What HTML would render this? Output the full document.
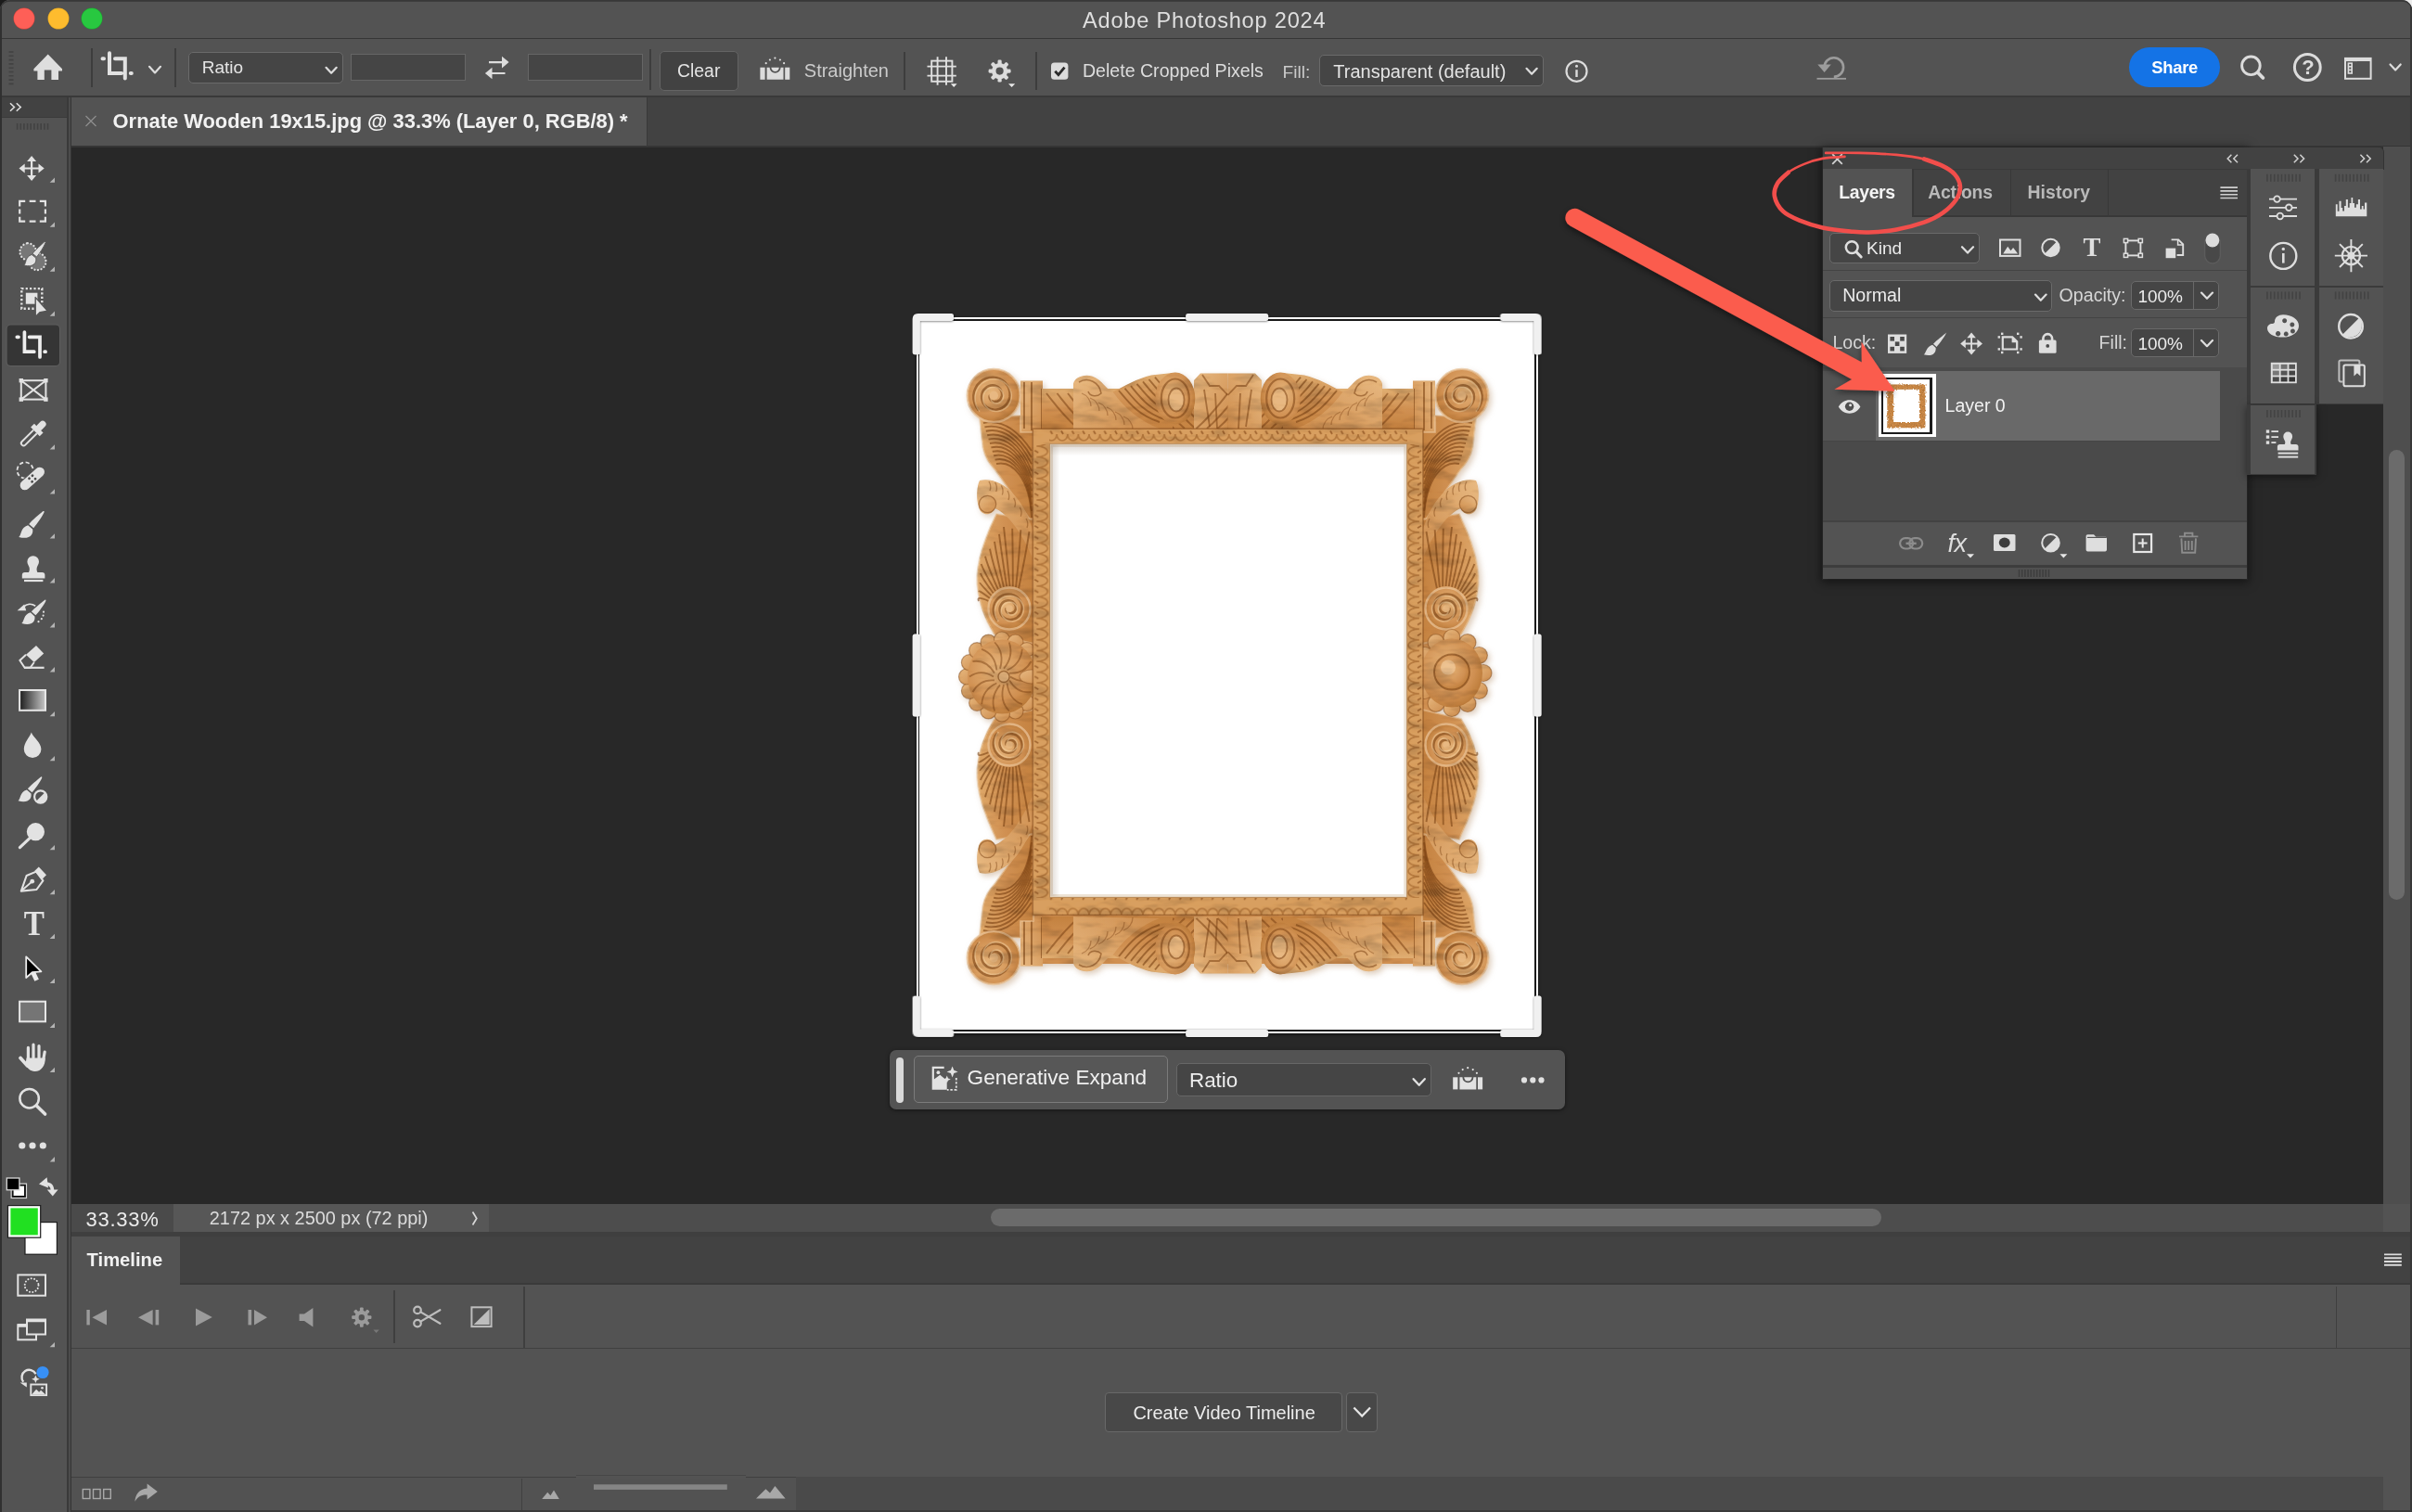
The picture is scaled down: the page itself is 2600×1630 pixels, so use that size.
<!DOCTYPE html>
<html lang="en">
<head>
<meta charset="utf-8">
<title>Adobe Photoshop 2024</title>
<style>
*{box-sizing:border-box;margin:0;padding:0}
html,body{width:2600px;height:1630px;overflow:hidden;background:#1b1b1b}
body{font-family:"Liberation Sans",sans-serif;color:#e4e4e4;position:relative}
.a{position:absolute}
.t{position:absolute;line-height:1;white-space:nowrap;transform:translateY(-0.8465em)}
.b{font-weight:bold}
svg{position:absolute;overflow:visible}
#win{will-change:transform;position:absolute;left:0;top:0;width:2600px;height:1630px;background:#535353;border-radius:11px 11px 0 0;overflow:hidden}
.fld{position:absolute;background:#454545;border:1.5px solid #6a6a6a;border-radius:5px}
.inp{position:absolute;background:#454545;border:1.5px solid #666}
.vsep{position:absolute;width:2px;background:#3d3d3d}
</style>
</head>
<body>
<div class="a" style="left:2584px;top:0;width:16px;height:16px;background:#ececec"></div>
<div id="win">
<!--TITLEBAR-->
<div class="a" style="left:0;top:0;width:2600px;height:41px;background:#535353"></div>
<div class="a" style="left:0;top:40.9px;width:2600px;height:1.4px;background:#363636"></div>
<div class="a" style="left:15px;top:9px;width:22px;height:22px;border-radius:50%;background:#fe5f57;box-shadow:0 0 0 .5px #d9453d"></div>
<div class="a" style="left:52px;top:9px;width:22px;height:22px;border-radius:50%;background:#febc2e;box-shadow:0 0 0 .5px #d8a020"></div>
<div class="a" style="left:88px;top:9px;width:22px;height:22px;border-radius:50%;background:#28c840;box-shadow:0 0 0 .5px #1aa52e"></div>
<span class="t" style="left:1167px;top:31px;font-size:23.6px;letter-spacing:.79px;color:#dfdfdf">Adobe Photoshop 2024</span>
<!--OPTIONS-->
<div class="a" style="left:0;top:103px;width:2600px;height:2.4px;background:#393939"></div>
<div class="vsep" style="left:97.6px;top:52px;height:42px"></div>
<div class="vsep" style="left:188.2px;top:52px;height:42px"></div>
<div class="vsep" style="left:700.3px;top:53px;height:44px"></div>
<div class="vsep" style="left:974.4px;top:56px;height:41px"></div>
<div class="vsep" style="left:1116.4px;top:56px;height:41px"></div>
<div class="fld" style="left:203.3px;top:55.5px;width:166.4px;height:34.2px"></div>
<span class="t" style="left:217.7px;top:79.2px;font-size:19px">Ratio</span>
<div class="inp" style="left:378.4px;top:57.6px;width:124px;height:29.6px"></div>
<div class="inp" style="left:569.2px;top:57.6px;width:124px;height:29.6px"></div>
<div class="fld" style="left:711px;top:55px;width:84.6px;height:42.8px;background:#424242;border-color:#646464"></div>
<span class="t" style="left:730px;top:82.7px;font-size:19.4px">Clear</span>
<span class="t" style="left:866.8px;top:82.7px;font-size:20px;color:#cbcbcb">Straighten</span>
<span class="t" style="left:1166.9px;top:84.3px;font-size:19.6px;color:#dddddd">Delete Cropped Pixels</span>
<span class="t" style="left:1382.5px;top:84.3px;font-size:19.2px;color:#cbcbcb">Fill:</span>
<div class="fld" style="left:1422.3px;top:59.4px;width:242px;height:33.4px"></div>
<span class="t" style="left:1437.3px;top:84.3px;font-size:20px">Transparent (default)</span>
<div class="a" style="left:2294.7px;top:50.8px;width:98.6px;height:43.5px;border-radius:22px;background:#1473e6"></div>
<span class="t b" style="left:2319.3px;top:79.5px;font-size:18.4px;letter-spacing:-.3px;color:#fff">Share</span>
<span class="t b" style="left:2481.3px;top:80.6px;font-size:22px;color:#dcdcdc">?</span>
<svg style="left:0;top:0" width="2600" height="110" viewBox="0 0 2600 110">
<g stroke="#424242" stroke-width="1.6"><path d="M9.5 56h5M9.5 60.3h5M9.5 64.6h5M9.5 68.9h5M9.5 73.2h5M9.5 77.5h5M9.5 81.8h5M9.5 86.1h5M9.5 90.4h5"/></g>
<path d="M51.7 58.6 67 74.2v2.4h-4V86H55.4V75.6H47.8V86H40.4V76.6h-4v-2.4z" fill="#dedede"/>
<g stroke="#e2e2e2" stroke-width="4" stroke-linecap="round" fill="none"><path d="M118 57.2V79.1H131M124 63.2H134.8V84.6M110.5 63.2H112M140.8 79.1H141.8"/></g>
<g stroke="#dcdcdc" stroke-width="2.2" fill="none" stroke-linecap="round" stroke-linejoin="round"><path d="M161 71.8l6 6.6 6-6.6"/><path d="M351.5 72.8l5.6 6 5.6-6"/><path d="M1645.5 73.8l5.6 6 5.6-6"/><path d="M2576.5 69.5l5.6 6 5.6-6"/></g>
<g fill="#dcdcdc"><path d="M527 66h14v-5.2l7.6 6.3-7.6 6.3V68.2H527zM544.5 77.9h-14v-5.2l-7.6 6.3 7.6 6.3v-5.2h14z"/></g>
<g fill="#dcdcdc"><rect x="819.4" y="72.7" width="5.2" height="13.1"/><rect x="846.2" y="72.7" width="5.1" height="13.1"/><path d="M826.6 72.7h3a6 6 0 0 0 12 0h2.9v13.1h-17.9z"/><path d="M831.4 72.7h8.4a4.2 4.2 0 0 1-8.4 0z"/><circle cx="825.7" cy="68.2" r="1.1"/><circle cx="829.9" cy="64.5" r="1.1"/><circle cx="835.4" cy="62.6" r="1.1"/><circle cx="840.9" cy="64.5" r="1.1"/><circle cx="845.1" cy="68.2" r="1.1"/></g>
<g stroke="#e0e0e0" stroke-width="1.9" fill="none"><rect x="1004.2" y="65.6" width="22.2" height="22.2"/><path d="M1010.6 61.2V91.8M1020 61.2V91.8M999.5 71.6H1030.8M999.5 81.6H1030.8"/></g>
<path d="M1024.8 90.3h6.8l-3.4 3.8zM1087 90.3h7.2l-3.6 3.8z" fill="#e8e8e8"/>
<g transform="translate(1077.6 76.6)" fill="#dcdcdc"><path fill-rule="evenodd" d="M0-8.6A8.6 8.6 0 1 0 0 8.6 8.6 8.6 0 1 0 0-8.6zM0-4.1A4.1 4.1 0 1 1 0 4.1 4.1 4.1 0 1 1 0-4.1z"/><g id="gt"><rect x="-2.1" y="-12" width="4.2" height="5" rx="1.4"/><rect x="-2.1" y="7" width="4.2" height="5" rx="1.4"/></g><use href="#gt" transform="rotate(45)"/><use href="#gt" transform="rotate(90)"/><use href="#gt" transform="rotate(135)"/></g>
<rect x="1133" y="67.6" width="18.4" height="18.2" rx="3.6" fill="#dcdcdc"/><path d="M1137.3 76.8l3.6 3.9 6.6-8" stroke="#2b2b2b" stroke-width="2.8" fill="none"/>
<g stroke="#dcdcdc" fill="none" stroke-width="2.2"><circle cx="1699.5" cy="76.8" r="11"/><path d="M1699.5 75.2V83" stroke-width="2.4"/></g><circle cx="1699.5" cy="71.2" r="1.5" fill="#dcdcdc"/>
<g stroke="#9c9c9c" fill="none" stroke-width="2.6"><path d="M1966.5 72.5A10.3 10.3 0 1 1 1976.8 82.8"/><path d="M1958.5 84.8H1990" stroke-width="1.8"/></g><path d="M1959.3 69.5h14.5l-7.2 8.6z" fill="#9c9c9c"/>
<g stroke="#dcdcdc" fill="none" stroke-width="2.900" stroke-linecap="round"><circle cx="2426.400" cy="70.800" r="9.800"/><path d="M2433.800 78.200l5.600 5.800" stroke-width="3.800"/></g>
<circle cx="2487.300" cy="72.500" r="13.900" stroke="#dcdcdc" stroke-width="3" fill="none"/>
<g stroke="#dcdcdc" fill="none" stroke-width="2"><rect x="2528" y="62.900" width="27.600" height="21.900"/><path d="M2528 64.400h27.600" stroke-width="3.400"/></g><rect x="2530.600" y="67.400" width="5.400" height="12.400" fill="#dcdcdc"/><g fill="#535353"><rect x="2532.300" y="69" width="2" height="2"/><rect x="2532.300" y="72.600" width="2" height="2"/><rect x="2532.300" y="76.200" width="2" height="2"/></g>
</svg>
<!--TABBAR-->
<div class="a" style="left:0;top:105.3px;width:2600px;height:52.7px;background:#424242"></div>
<div class="a" style="left:77.2px;top:105.3px;width:619.6px;height:51.6px;background:#535353"></div>
<div class="a" style="left:77.2px;top:156.9px;width:2523px;height:2px;background:#353535"></div>
<div class="a" style="left:696.8px;top:105.3px;width:1.4px;height:52.7px;background:#393939"></div>
<svg style="left:0;top:100px" width="200" height="60" viewBox="0 100 200 60"><path d="M92.5 125l11 11M103.5 125l-11 11" stroke="#8f8f8f" stroke-width="1.2"/></svg>
<span class="t b" style="left:121.6px;top:139.4px;font-size:21.9px;color:#f2f2f2">Ornate Wooden 19x15.jpg @ 33.3% (Layer 0, RGB/8) *</span>
<!--CANVAS-->
<div class="a" style="left:77.2px;top:158.9px;width:2491.5px;height:1139.1px;background:#282828"></div>
<div class="a" style="left:2568.7px;top:158px;width:31.3px;height:1140px;background:#4e4e4e"></div>
<div class="a" style="left:2574.6px;top:485px;width:17.6px;height:484.5px;border-radius:9px;background:#6b6b6b"></div>
<!--CROP-->
<div class="a" style="left:987.7px;top:342.4px;width:670px;height:771.2px;background:#1a1a1a;box-shadow:0 1px 3px rgba(0,0,0,.7)"></div>
<div class="a" style="left:987.7px;top:342.4px;width:670px;height:771.2px;border:2px solid #fff"></div>
<div class="a" style="left:991.2px;top:346px;width:662.6px;height:763.8px;background:#fff"></div>
<svg style="left:980px;top:336px" width="690" height="790" viewBox="980 336 690 790">
<defs>
<linearGradient id="wv" x1="0" x2="1" y1="0" y2="0"><stop offset="0" stop-color="#dba669"/><stop offset=".5" stop-color="#cc8d50"/><stop offset="1" stop-color="#c07f3f"/></linearGradient>
<linearGradient id="wh" x1="0" x2="0" y1="0" y2="1"><stop offset="0" stop-color="#dcab70"/><stop offset=".5" stop-color="#cc8d50"/><stop offset="1" stop-color="#bf7e3e"/></linearGradient>
<linearGradient id="wl" x1="0" x2="1" y1="0" y2="1"><stop offset="0" stop-color="#e4b680"/><stop offset="1" stop-color="#c98a4c"/></linearGradient>
<radialGradient id="wr" cx=".42" cy=".4" r=".65"><stop offset="0" stop-color="#e2b27a"/><stop offset=".7" stop-color="#cc8d50"/><stop offset="1" stop-color="#b57636"/></radialGradient>
<pattern id="bd" width="11.600" height="20" patternUnits="userSpaceOnUse" x="1116" y="462"><path d="M0 6a5.800 7 0 0 0 11.600 0" fill="none" stroke="#9a5d26" stroke-opacity=".6" stroke-width="1.600"/><path d="M4.800 2.500l2 3.500" stroke="#8a4f1e" stroke-width="1.800" stroke-opacity=".7"/></pattern>
<pattern id="bdv" width="20" height="11.6" patternUnits="userSpaceOnUse" x="1113.3" y="481"><path d="M4 0A12 5.8 0 0 1 4 11.6" fill="none" stroke="#9a5d26" stroke-opacity=".6" stroke-width="1.6"/><path d="M2 4.6l4 2.4" stroke="#8a4f1e" stroke-width="1.8" stroke-opacity=".7"/></pattern>
<filter id="fsh" x="-5%" y="-5%" width="112%" height="112%" color-interpolation-filters="sRGB"><feTurbulence type="fractalNoise" baseFrequency="0.03 0.09" numOctaves="3" seed="7" result="n"/><feColorMatrix in="n" type="matrix" values="0 0 0 0 0.62  0 0 0 0 0.62  0 0 0 0 0.62  0 0 0 0 1" result="base"/><feColorMatrix in="n" type="matrix" values="0.45 0 0 0 0.76  0.45 0 0 0 0.75  0.45 0 0 0 0.73  0 0 0 0 1" result="g"/><feComposite in="SourceGraphic" in2="g" operator="arithmetic" k1="1.02" k2="0" k3="0" k4="0" result="tex"/><feDropShadow in="tex" dx="2.5" dy="3" stdDeviation="3" flood-color="#a07040" flood-opacity=".35"/></filter>
<g id="fq"><path d="M1056 450L1059.5 482C1062 495 1068 501 1073 507L1114 566L1114 466L1100 466L1100 448z" fill="url(#wv)" stroke="#e9c7a0" stroke-width="2.2" stroke-opacity=".5" stroke-linejoin="round"/>
<path d="M1074 554C1062 580 1052 605 1053.5 630C1055 652 1062 668 1072 684L1114 694L1114 560z" fill="url(#wv)" stroke="#e9c7a0" stroke-width="2.2" stroke-opacity=".5" stroke-linejoin="round"/>
<path d="M1056 518C1080 513 1105 538 1114 575L1114 604C1102 574 1086 553 1072 548C1070 556 1058 557 1055 547C1052 536 1053 524 1056 518z" fill="url(#wl)"/>
<circle cx="1064.5" cy="543.5" r="9.2" fill="url(#wl)" stroke="#7a4214" stroke-opacity=".5" stroke-width="1.2"/>
<path d="M1060.0 456.0C1078.0 452.0 1096.0 462.0 1112.0 486.0" fill="none" stroke="#7a4214" stroke-opacity=".62" stroke-width="1.9"/>
<path d="M1061.4 460.4C1079.4 456.4 1097.4 467.4 1112.0 493.2" fill="none" stroke="#7a4214" stroke-opacity=".62" stroke-width="1.9"/>
<path d="M1062.8 464.8C1080.8 460.8 1098.8 472.8 1112.0 500.4" fill="none" stroke="#7a4214" stroke-opacity=".62" stroke-width="1.9"/>
<path d="M1064.2 469.2C1082.2 465.2 1100.2 478.2 1112.0 507.6" fill="none" stroke="#7a4214" stroke-opacity=".62" stroke-width="1.9"/>
<path d="M1065.6 473.6C1083.6 469.6 1101.6 483.6 1112.0 514.8" fill="none" stroke="#7a4214" stroke-opacity=".62" stroke-width="1.9"/>
<path d="M1067.0 478.0C1085.0 474.0 1103.0 489.0 1112.0 522.0" fill="none" stroke="#7a4214" stroke-opacity=".62" stroke-width="1.9"/>
<path d="M1068.4 482.4C1086.4 478.4 1104.4 494.4 1112.0 529.2" fill="none" stroke="#7a4214" stroke-opacity=".62" stroke-width="1.9"/>
<path d="M1069.8 486.8C1087.8 482.8 1105.8 499.8 1112.0 536.4" fill="none" stroke="#7a4214" stroke-opacity=".62" stroke-width="1.9"/>
<path d="M1071.2 491.2C1089.2 487.2 1107.2 505.2 1112.0 543.6" fill="none" stroke="#7a4214" stroke-opacity=".62" stroke-width="1.9"/>
<path d="M1072.6 495.6C1090.6 491.6 1108.6 510.6 1112.0 550.8" fill="none" stroke="#7a4214" stroke-opacity=".62" stroke-width="1.9"/>
<path d="M1074.0 500.0C1092.0 496.0 1110.0 516.0 1112.0 558.0" fill="none" stroke="#7a4214" stroke-opacity=".62" stroke-width="1.9"/>
<path d="M1065.4 647.8Q1052.2 641.9 1055.0 648.0" fill="none" stroke="#7a4214" stroke-opacity=".6" stroke-width="1.9"/>
<path d="M1066.8 644.8Q1054.1 635.4 1055.7 638.0" fill="none" stroke="#7a4214" stroke-opacity=".6" stroke-width="1.9"/>
<path d="M1068.5 641.9Q1056.1 629.0 1056.3 628.0" fill="none" stroke="#7a4214" stroke-opacity=".6" stroke-width="1.9"/>
<path d="M1070.7 639.4Q1058.3 622.7 1057.0 618.0" fill="none" stroke="#7a4214" stroke-opacity=".6" stroke-width="1.9"/>
<path d="M1073.1 637.2Q1060.7 616.6 1057.7 608.0" fill="none" stroke="#7a4214" stroke-opacity=".6" stroke-width="1.9"/>
<path d="M1075.8 635.3Q1065.1 611.5 1062.0 599.7" fill="none" stroke="#7a4214" stroke-opacity=".6" stroke-width="1.9"/>
<path d="M1078.8 633.8Q1069.9 606.8 1067.0 591.8" fill="none" stroke="#7a4214" stroke-opacity=".6" stroke-width="1.9"/>
<path d="M1082.0 632.8Q1074.8 602.3 1072.0 583.8" fill="none" stroke="#7a4214" stroke-opacity=".6" stroke-width="1.9"/>
<path d="M1085.2 632.2Q1079.8 598.0 1077.0 575.9" fill="none" stroke="#7a4214" stroke-opacity=".6" stroke-width="1.9"/>
<path d="M1088.5 632.0Q1084.8 594.0 1082.0 568.0" fill="none" stroke="#7a4214" stroke-opacity=".6" stroke-width="1.9"/>
<path d="M1091.8 632.3Q1091.8 595.0 1091.2 569.7" fill="none" stroke="#7a4214" stroke-opacity=".6" stroke-width="1.9"/>
<path d="M1095.1 633.1Q1098.9 596.2 1100.3 571.3" fill="none" stroke="#7a4214" stroke-opacity=".6" stroke-width="1.9"/>
<path d="M1098.1 634.2Q1105.8 597.6 1109.5 573.0" fill="none" stroke="#7a4214" stroke-opacity=".6" stroke-width="1.9"/>
<path d="M1066.0 519.0q3 5 1 10" fill="none" stroke="#7a4214" stroke-opacity=".45" stroke-width="1.3"/>
<path d="M1072.7 520.1q3 5 1 10" fill="none" stroke="#7a4214" stroke-opacity=".45" stroke-width="1.3"/>
<path d="M1079.3 523.4q3 5 1 10" fill="none" stroke="#7a4214" stroke-opacity=".45" stroke-width="1.3"/>
<path d="M1086.0 529.0q3 5 1 10" fill="none" stroke="#7a4214" stroke-opacity=".45" stroke-width="1.3"/>
<path d="M1092.7 536.8q3 5 1 10" fill="none" stroke="#7a4214" stroke-opacity=".45" stroke-width="1.3"/>
<path d="M1099.3 546.8q3 5 1 10" fill="none" stroke="#7a4214" stroke-opacity=".45" stroke-width="1.3"/>
<path d="M1106.0 559.0q3 5 1 10" fill="none" stroke="#7a4214" stroke-opacity=".45" stroke-width="1.3"/>
<circle cx="1088" cy="656" r="22.5" fill="url(#wr)" stroke="#e8c39a" stroke-width="2.4" stroke-opacity=".7"/><path d="M1074.7 668.2L1072.9 665.3L1071.6 662.3L1070.9 659.0L1070.8 655.8L1071.4 652.6L1072.5 649.6L1074.1 647.0L1076.2 644.7L1078.7 642.8L1081.4 641.5L1084.3 640.7L1087.2 640.5L1090.1 640.8L1092.9 641.7L1095.3 643.0L1097.5 644.8L1099.3 646.9L1100.6 649.3L1101.5 651.8L1101.8 654.4L1101.6 657.0L1101.0 659.5L1099.9 661.8L1098.5 663.8L1096.7 665.5L1094.6 666.8L1092.4 667.6L1090.1 668.1L1087.9 668.0L1085.6 667.6L1083.6 666.8L1081.8 665.6L1080.2 664.1L1079.0 662.4L1078.2 660.5L1077.7 658.5L1077.6 656.5L1077.9 654.6L1078.6 652.8L1079.5 651.2L1080.7 649.8L1082.1 648.7L1083.7 647.9L1085.3 647.5L1087.0 647.3L1088.6 647.5L1090.2 648.0L1091.6 648.7L1092.7 649.7L1093.7 650.8L1094.4 652.1L1094.8 653.4L1095.0 654.8L1094.9 656.1L1094.6 657.3L1094.0 658.5L1093.3 659.4L1092.4 660.2L1091.4 660.8L1090.3 661.1L1089.3 661.3L1088.3 661.2L1087.3 661.0L1086.4 660.6L1085.7 660.0L1085.1 659.4L1084.7 658.6L1084.5 657.9L1084.4 657.1L1084.4 656.4" fill="none" stroke="#7a4214" stroke-opacity=".6" stroke-width="2.600" stroke-linecap="round"/><path d="M1076.3 670.0L1074.5 667.1L1073.2 664.1L1072.5 660.8L1072.4 657.6L1073.0 654.4L1074.1 651.4L1075.7 648.8L1077.8 646.5L1080.3 644.6L1083.0 643.3L1085.9 642.5L1088.8 642.3L1091.7 642.6L1094.5 643.5L1096.9 644.8L1099.1 646.6L1100.9 648.7L1102.2 651.1L1103.1 653.6L1103.4 656.2L1103.2 658.8L1102.6 661.3L1101.5 663.6L1100.1 665.6L1098.3 667.3L1096.2 668.6L1094.0 669.4L1091.7 669.9L1089.5 669.8L1087.2 669.4L1085.2 668.6L1083.4 667.4L1081.8 665.9L1080.6 664.2L1079.8 662.3L1079.3 660.3L1079.2 658.3L1079.5 656.4L1080.2 654.6L1081.1 653.0L1082.3 651.6L1083.7 650.5L1085.3 649.7L1086.9 649.3L1088.6 649.1L1090.2 649.3L1091.8 649.8L1093.2 650.5L1094.3 651.5L1095.3 652.6L1096.0 653.9L1096.4 655.2L1096.6 656.6L1096.5 657.9L1096.2 659.1L1095.6 660.3L1094.9 661.2L1094.0 662.0L1093.0 662.6L1091.9 662.9L1090.9 663.1L1089.9 663.0L1088.9 662.8L1088.0 662.4L1087.3 661.8L1086.7 661.2L1086.3 660.4L1086.1 659.7L1086.0 658.9L1086.0 658.2" fill="none" stroke="#f0cfa2" stroke-opacity=".5" stroke-width="1.600"/><circle cx="1088" cy="656" r="3.8" fill="#e3b47f"/>
<circle cx="1071.2" cy="426.4" r="28.5" fill="url(#wr)" stroke="#e8c39a" stroke-width="2.4" stroke-opacity=".7"/><path d="M1054.4 441.8L1052.0 438.2L1050.4 434.3L1049.5 430.3L1049.4 426.1L1050.1 422.1L1051.6 418.3L1053.6 414.9L1056.3 412.0L1059.4 409.7L1062.8 408.0L1066.5 407.0L1070.2 406.8L1073.9 407.2L1077.3 408.3L1080.5 410.0L1083.3 412.2L1085.5 414.9L1087.2 417.9L1088.2 421.1L1088.7 424.4L1088.5 427.7L1087.7 430.8L1086.3 433.7L1084.5 436.3L1082.2 438.4L1079.6 440.0L1076.8 441.1L1073.9 441.7L1071.0 441.6L1068.2 441.1L1065.6 440.0L1063.3 438.5L1061.4 436.6L1059.8 434.5L1058.8 432.1L1058.2 429.6L1058.1 427.1L1058.4 424.6L1059.2 422.3L1060.4 420.3L1062.0 418.6L1063.8 417.2L1065.7 416.2L1067.8 415.6L1069.9 415.4L1072.0 415.6L1074.0 416.2L1075.7 417.1L1077.2 418.4L1078.4 419.8L1079.3 421.4L1079.8 423.1L1080.1 424.8L1079.9 426.5L1079.5 428.1L1078.8 429.5L1077.9 430.7L1076.7 431.7L1075.5 432.5L1074.2 432.9L1072.8 433.1L1071.5 433.0L1070.3 432.7L1069.2 432.2L1068.3 431.5L1067.6 430.7L1067.0 429.8L1066.7 428.8L1066.6 427.8L1066.7 426.9" fill="none" stroke="#7a4214" stroke-opacity=".6" stroke-width="2.600" stroke-linecap="round"/><path d="M1056.0 443.6L1053.6 440.0L1052.0 436.1L1051.1 432.1L1051.0 427.9L1051.7 423.9L1053.2 420.1L1055.2 416.7L1057.9 413.8L1061.0 411.5L1064.4 409.8L1068.1 408.8L1071.8 408.6L1075.5 409.0L1078.9 410.1L1082.1 411.8L1084.9 414.0L1087.1 416.7L1088.8 419.7L1089.8 422.9L1090.3 426.2L1090.1 429.5L1089.3 432.6L1087.9 435.5L1086.1 438.1L1083.8 440.2L1081.2 441.8L1078.4 442.9L1075.5 443.5L1072.6 443.4L1069.8 442.9L1067.2 441.8L1064.9 440.3L1063.0 438.4L1061.4 436.3L1060.4 433.9L1059.8 431.4L1059.7 428.9L1060.0 426.4L1060.8 424.1L1062.0 422.1L1063.6 420.4L1065.4 419.0L1067.3 418.0L1069.4 417.4L1071.5 417.2L1073.6 417.4L1075.6 418.0L1077.3 418.9L1078.8 420.2L1080.0 421.6L1080.9 423.2L1081.4 424.9L1081.7 426.6L1081.5 428.3L1081.1 429.9L1080.4 431.3L1079.5 432.5L1078.3 433.5L1077.1 434.3L1075.8 434.7L1074.4 434.9L1073.1 434.8L1071.9 434.5L1070.8 434.0L1069.9 433.3L1069.2 432.5L1068.6 431.6L1068.3 430.6L1068.2 429.6L1068.3 428.7" fill="none" stroke="#f0cfa2" stroke-opacity=".5" stroke-width="1.600"/><circle cx="1071.2" cy="426.4" r="4.8" fill="#e3b47f"/></g>
<g id="ft"><rect x="1100" y="410.500" width="24" height="56" fill="url(#wl)"/><path d="M1104 412v50M1112 412v52M1123 419v44" stroke="#7a4214" stroke-opacity=".62" stroke-width="1.9" fill="none"/>
<rect x="1123" y="419" width="201" height="45" fill="url(#wh)"/>
<path d="M1128.0 424c8 10 18 24 34 38" fill="none" stroke="#7a4214" stroke-opacity=".55" stroke-width="2"/>
<path d="M1139.5 424c8 10 18 24 34 38" fill="none" stroke="#7a4214" stroke-opacity=".55" stroke-width="2"/>
<path d="M1151.0 424c8 10 18 24 34 38" fill="none" stroke="#7a4214" stroke-opacity=".55" stroke-width="2"/>
<path d="M1162.5 424c8 10 18 24 34 38" fill="none" stroke="#7a4214" stroke-opacity=".55" stroke-width="2"/>
<path d="M1174.0 424c8 10 18 24 34 38" fill="none" stroke="#7a4214" stroke-opacity=".55" stroke-width="2"/>
<path d="M1185.5 424c8 10 18 24 34 38" fill="none" stroke="#7a4214" stroke-opacity=".55" stroke-width="2"/>
<path d="M1197.0 424c8 10 18 24 34 38" fill="none" stroke="#7a4214" stroke-opacity=".55" stroke-width="2"/>
<path d="M1208.5 424c8 10 18 24 34 38" fill="none" stroke="#7a4214" stroke-opacity=".55" stroke-width="2"/>
<path d="M1220.0 424c8 10 18 24 34 38" fill="none" stroke="#7a4214" stroke-opacity=".55" stroke-width="2"/>
<path d="M1231.5 424c8 10 18 24 34 38" fill="none" stroke="#7a4214" stroke-opacity=".55" stroke-width="2"/>
<path d="M1243.0 424c8 10 18 24 34 38" fill="none" stroke="#7a4214" stroke-opacity=".55" stroke-width="2"/>
<path d="M1254.5 424c8 10 18 24 34 38" fill="none" stroke="#7a4214" stroke-opacity=".55" stroke-width="2"/>
<path d="M1266.0 424c8 10 18 24 34 38" fill="none" stroke="#7a4214" stroke-opacity=".55" stroke-width="2"/>
<path d="M1277.5 424c8 10 18 24 34 38" fill="none" stroke="#7a4214" stroke-opacity=".55" stroke-width="2"/>
<path d="M1289.0 424c8 10 18 24 34 38" fill="none" stroke="#7a4214" stroke-opacity=".55" stroke-width="2"/>
<path d="M1300.5 424c8 10 18 24 34 38" fill="none" stroke="#7a4214" stroke-opacity=".55" stroke-width="2"/>
<path d="M1312.0 424c8 10 18 24 34 38" fill="none" stroke="#7a4214" stroke-opacity=".55" stroke-width="2"/>
<path d="M1323.5 424c8 10 18 24 34 38" fill="none" stroke="#7a4214" stroke-opacity=".55" stroke-width="2"/>
<path d="M1199 423C1212 416 1226 408 1241 404.500L1264 402L1264 464L1199 464z" fill="url(#wh)"/>
<path d="M1206.0 421.0c10 12 20 26 44 34" fill="none" stroke="#7a4214" stroke-opacity=".6" stroke-width="1.9"/>
<path d="M1212.5 418.6c10 12 20 26 44 34" fill="none" stroke="#7a4214" stroke-opacity=".6" stroke-width="1.9"/>
<path d="M1219.0 416.2c10 12 20 26 44 34" fill="none" stroke="#7a4214" stroke-opacity=".6" stroke-width="1.9"/>
<path d="M1225.5 413.8c10 12 20 26 44 34" fill="none" stroke="#7a4214" stroke-opacity=".6" stroke-width="1.9"/>
<path d="M1232.0 411.4c10 12 20 26 44 34" fill="none" stroke="#7a4214" stroke-opacity=".6" stroke-width="1.9"/>
<path d="M1238.5 409.0c10 12 20 26 44 34" fill="none" stroke="#7a4214" stroke-opacity=".6" stroke-width="1.9"/>
<path d="M1245.0 406.6c10 12 20 26 44 34" fill="none" stroke="#7a4214" stroke-opacity=".6" stroke-width="1.9"/>
<path d="M1157 464L1157 414C1158 407 1168 403 1177 405.500C1188 409 1192 420 1200 423C1212 440 1230 455 1250 462z" fill="url(#wl)"/>
<path d="M1163 412c10-6 22 0 24 12c-4 4-12 4-14-2" fill="none" stroke="#7a4214" stroke-opacity=".55" stroke-width="1.6"/>
<path d="M1166.0 424.0c6 2 10 8 10 14" fill="none" stroke="#7a4214" stroke-opacity=".4" stroke-width="1.3"/>
<path d="M1175.0 429.0c6 2 10 8 10 14" fill="none" stroke="#7a4214" stroke-opacity=".4" stroke-width="1.3"/>
<path d="M1184.0 434.0c6 2 10 8 10 14" fill="none" stroke="#7a4214" stroke-opacity=".4" stroke-width="1.3"/>
<path d="M1193.0 439.0c6 2 10 8 10 14" fill="none" stroke="#7a4214" stroke-opacity=".4" stroke-width="1.3"/>
<path d="M1202.0 444.0c6 2 10 8 10 14" fill="none" stroke="#7a4214" stroke-opacity=".4" stroke-width="1.3"/>
<path d="M1211.0 449.0c6 2 10 8 10 14" fill="none" stroke="#7a4214" stroke-opacity=".4" stroke-width="1.3"/>
<path d="M1287 410L1294 402.500L1323.500 402.500L1323.500 464L1287 464z" fill="url(#wl)"/>
<path d="M1296 404l8 12 10 0 9.5 10M1298 420l6 40M1310 424l2 38" fill="none" stroke="#7a4214" stroke-opacity=".55" stroke-width="1.8"/>
<ellipse cx="1266.800" cy="429.500" rx="21.500" ry="28" fill="url(#wr)"/>
<ellipse cx="1266.800" cy="429.500" rx="15" ry="21" fill="none" stroke="#7a4214" stroke-opacity=".55" stroke-width="2.2"/><ellipse cx="1268" cy="431" rx="8.500" ry="12.500" fill="#e3b47f" stroke="#7a4214" stroke-opacity=".55" stroke-width="1.8"/></g>
<linearGradient id="ist" x1="0" x2="0" y1="0" y2="1"><stop offset="0" stop-color="#8a7660" stop-opacity=".28"/><stop offset="1" stop-color="#8a7660" stop-opacity="0"/></linearGradient><linearGradient id="isl" x1="0" x2="1" y1="0" y2="0"><stop offset="0" stop-color="#8a7660" stop-opacity=".28"/><stop offset="1" stop-color="#8a7660" stop-opacity="0"/></linearGradient>
</defs>
<g filter="url(#fsh)">
<rect x="1100" y="419" width="447" height="620" fill="#cc8d50"/>
<use href="#ft"/>
<use href="#ft" transform="translate(2647.0 0) scale(-1 1)"/>
<use href="#ft" transform="translate(0 1452.0) scale(1 -1)"/>
<use href="#ft" transform="translate(2647.0 1452.0) scale(-1 -1)"/>
<use href="#fq"/>
<use href="#fq" transform="translate(2647.0 0) scale(-1 1)"/>
<use href="#fq" transform="translate(0 1459.0) scale(1 -1)"/>
<use href="#fq" transform="translate(2647.0 1459.0) scale(-1 -1)"/>
<g><circle cx="1118.0" cy="729.5" r="8.500" fill="url(#wl)" stroke="#7a4214" stroke-opacity=".45" stroke-width="1.2"/><circle cx="1115.1" cy="744.8" r="8.500" fill="url(#wl)" stroke="#7a4214" stroke-opacity=".45" stroke-width="1.2"/><circle cx="1106.9" cy="757.8" r="8.500" fill="url(#wl)" stroke="#7a4214" stroke-opacity=".45" stroke-width="1.2"/><circle cx="1094.5" cy="766.5" r="8.500" fill="url(#wl)" stroke="#7a4214" stroke-opacity=".45" stroke-width="1.2"/><circle cx="1080.0" cy="769.5" r="8.500" fill="url(#wl)" stroke="#7a4214" stroke-opacity=".45" stroke-width="1.2"/><circle cx="1065.5" cy="766.5" r="8.500" fill="url(#wl)" stroke="#7a4214" stroke-opacity=".45" stroke-width="1.2"/><circle cx="1053.1" cy="757.8" r="8.500" fill="url(#wl)" stroke="#7a4214" stroke-opacity=".45" stroke-width="1.2"/><circle cx="1044.9" cy="744.8" r="8.500" fill="url(#wl)" stroke="#7a4214" stroke-opacity=".45" stroke-width="1.2"/><circle cx="1042.0" cy="729.5" r="8.500" fill="url(#wl)" stroke="#7a4214" stroke-opacity=".45" stroke-width="1.2"/><circle cx="1044.9" cy="714.2" r="8.500" fill="url(#wl)" stroke="#7a4214" stroke-opacity=".45" stroke-width="1.2"/><circle cx="1053.1" cy="701.2" r="8.500" fill="url(#wl)" stroke="#7a4214" stroke-opacity=".45" stroke-width="1.2"/><circle cx="1065.5" cy="692.5" r="8.500" fill="url(#wl)" stroke="#7a4214" stroke-opacity=".45" stroke-width="1.2"/><circle cx="1080.0" cy="689.5" r="8.500" fill="url(#wl)" stroke="#7a4214" stroke-opacity=".45" stroke-width="1.2"/><circle cx="1094.5" cy="692.5" r="8.500" fill="url(#wl)" stroke="#7a4214" stroke-opacity=".45" stroke-width="1.2"/><circle cx="1106.9" cy="701.2" r="8.500" fill="url(#wl)" stroke="#7a4214" stroke-opacity=".45" stroke-width="1.2"/><circle cx="1115.1" cy="714.2" r="8.500" fill="url(#wl)" stroke="#7a4214" stroke-opacity=".45" stroke-width="1.2"/><ellipse cx="1080" cy="729.5" rx="37" ry="40" fill="url(#wr)"/>
<path d="M1089.0 729.5Q1102.5 738.4 1115.0 729.5" fill="none" stroke="#7a4214" stroke-opacity=".5" stroke-width="1.8"/>
<path d="M1088.1 733.4Q1096.7 748.1 1111.5 746.0" fill="none" stroke="#7a4214" stroke-opacity=".5" stroke-width="1.8"/>
<path d="M1085.6 736.5Q1087.6 754.2 1101.8 759.2" fill="none" stroke="#7a4214" stroke-opacity=".5" stroke-width="1.8"/>
<path d="M1082.0 738.3Q1077.0 755.3 1087.8 766.5" fill="none" stroke="#7a4214" stroke-opacity=".5" stroke-width="1.8"/>
<path d="M1078.0 738.3Q1067.0 751.3 1072.2 766.5" fill="none" stroke="#7a4214" stroke-opacity=".5" stroke-width="1.8"/>
<path d="M1074.4 736.5Q1059.5 743.0 1058.2 759.2" fill="none" stroke="#7a4214" stroke-opacity=".5" stroke-width="1.8"/>
<path d="M1071.9 733.4Q1056.1 732.1 1048.5 746.0" fill="none" stroke="#7a4214" stroke-opacity=".5" stroke-width="1.8"/>
<path d="M1071.0 729.5Q1057.5 720.6 1045.0 729.5" fill="none" stroke="#7a4214" stroke-opacity=".5" stroke-width="1.8"/>
<path d="M1071.9 725.6Q1063.3 710.9 1048.5 713.0" fill="none" stroke="#7a4214" stroke-opacity=".5" stroke-width="1.8"/>
<path d="M1074.4 722.5Q1072.4 704.8 1058.2 699.8" fill="none" stroke="#7a4214" stroke-opacity=".5" stroke-width="1.8"/>
<path d="M1078.0 720.7Q1083.0 703.7 1072.2 692.5" fill="none" stroke="#7a4214" stroke-opacity=".5" stroke-width="1.8"/>
<path d="M1082.0 720.7Q1093.0 707.7 1087.8 692.5" fill="none" stroke="#7a4214" stroke-opacity=".5" stroke-width="1.8"/>
<path d="M1085.6 722.5Q1100.5 716.0 1101.8 699.8" fill="none" stroke="#7a4214" stroke-opacity=".5" stroke-width="1.8"/>
<path d="M1088.1 725.6Q1103.9 726.9 1111.5 713.0" fill="none" stroke="#7a4214" stroke-opacity=".5" stroke-width="1.8"/>
<circle cx="1082" cy="729.5" r="6" fill="#e3b47f" stroke="#7a4214" stroke-opacity=".6" stroke-width="1.4"/><ellipse cx="1112" cy="729.5" rx="13" ry="7.500" fill="url(#wl)" stroke="#7a4214" stroke-opacity=".4" stroke-width="1.2"/></g>
<g>
<circle cx="1599.0" cy="725.5" r="9" fill="url(#wl)" stroke="#7a4214" stroke-opacity=".45" stroke-width="1.2"/>
<circle cx="1594.4" cy="744.5" r="9" fill="url(#wl)" stroke="#7a4214" stroke-opacity=".45" stroke-width="1.2"/>
<circle cx="1582.0" cy="758.4" r="9" fill="url(#wl)" stroke="#7a4214" stroke-opacity=".45" stroke-width="1.2"/>
<circle cx="1565.0" cy="763.5" r="9" fill="url(#wl)" stroke="#7a4214" stroke-opacity=".45" stroke-width="1.2"/>
<circle cx="1548.0" cy="758.4" r="9" fill="url(#wl)" stroke="#7a4214" stroke-opacity=".45" stroke-width="1.2"/>
<circle cx="1535.6" cy="744.5" r="9" fill="url(#wl)" stroke="#7a4214" stroke-opacity=".45" stroke-width="1.2"/>
<circle cx="1531.0" cy="725.5" r="9" fill="url(#wl)" stroke="#7a4214" stroke-opacity=".45" stroke-width="1.2"/>
<circle cx="1535.6" cy="706.5" r="9" fill="url(#wl)" stroke="#7a4214" stroke-opacity=".45" stroke-width="1.2"/>
<circle cx="1548.0" cy="692.6" r="9" fill="url(#wl)" stroke="#7a4214" stroke-opacity=".45" stroke-width="1.2"/>
<circle cx="1565.0" cy="687.5" r="9" fill="url(#wl)" stroke="#7a4214" stroke-opacity=".45" stroke-width="1.2"/>
<circle cx="1582.0" cy="692.6" r="9" fill="url(#wl)" stroke="#7a4214" stroke-opacity=".45" stroke-width="1.2"/>
<circle cx="1594.4" cy="706.5" r="9" fill="url(#wl)" stroke="#7a4214" stroke-opacity=".45" stroke-width="1.2"/>
<ellipse cx="1565.0" cy="725.5" rx="33" ry="37" fill="url(#wr)"/><circle cx="1565.0" cy="724.5" r="19" fill="url(#wr)" stroke="#7a4214" stroke-opacity=".6" stroke-width="2"/><circle cx="1561.0" cy="719.5" r="8" fill="#ecc89c" opacity=".7"/></g>
<rect x="1113.300" y="462.200" width="420.700" height="524.200" fill="#d49c5e"/>
<rect x="1131" y="462.200" width="386" height="16.400" fill="url(#bd)"/><rect x="1131" y="968" width="386" height="18.400" fill="url(#bd)" transform="translate(0 1954.400) scale(1 -1)"/>
<rect x="1113.300" y="479" width="18.500" height="489" fill="url(#bdv)"/><rect x="1113.300" y="479" width="18.500" height="489" fill="url(#bdv)" transform="translate(2647.300 0) scale(-1 1)"/>
<rect x="1113.300" y="462.200" width="420.700" height="524.200" fill="none" stroke="#7a4214" stroke-opacity=".5" stroke-width="1.600"/>
</g>
<rect x="1131.800" y="478.600" width="384.600" height="488.600" fill="#fff" stroke="#b98a58" stroke-width="1.400"/>
<rect x="1133.500" y="480.300" width="381.200" height="485.200" fill="none" stroke="#e9dccc" stroke-width="3" opacity=".8"/>
<rect x="1132.5" y="479.3" width="383" height="12" fill="url(#ist)"/><rect x="1132.5" y="479.3" width="10" height="487" fill="url(#isl)"/>
</svg>
<svg style="left:975px;top:330px" width="700" height="800" viewBox="975 330 700 800"><defs><filter id="hsh" x="-5%" y="-5%" width="110%" height="110%"><feDropShadow dx="0" dy=".5" stdDeviation="1.2" flood-color="#000" flood-opacity=".6"/></filter></defs><g fill="#f0f0f0" filter="url(#hsh)"><path transform="translate(983.7 338) scale(1 1)" d="M6 0H41.8Q44.3 0 44.3 2.5V5.5Q44.3 8 41.8 8H8V41.8Q8 44.3 5.5 44.3H2.5Q0 44.3 0 41.8V6Q0 0 6 0z"/><path transform="translate(1661.6 338) scale(-1 1)" d="M6 0H41.8Q44.3 0 44.3 2.5V5.5Q44.3 8 41.8 8H8V41.8Q8 44.3 5.5 44.3H2.5Q0 44.3 0 41.8V6Q0 0 6 0z"/><path transform="translate(983.7 1117.9) scale(1 -1)" d="M6 0H41.8Q44.3 0 44.3 2.5V5.5Q44.3 8 41.8 8H8V41.8Q8 44.3 5.5 44.3H2.5Q0 44.3 0 41.8V6Q0 0 6 0z"/><path transform="translate(1661.6 1117.9) scale(-1 -1)" d="M6 0H41.8Q44.3 0 44.3 2.5V5.5Q44.3 8 41.8 8H8V41.8Q8 44.3 5.5 44.3H2.5Q0 44.3 0 41.8V6Q0 0 6 0z"/><rect x="1278.15" y="338" width="89" height="8" rx="2.5"/><rect x="1278.15" y="1109.9" width="89" height="8" rx="2.5"/><rect x="983.7" y="683.45" width="8" height="89" rx="2.5"/><rect x="1653.6" y="683.45" width="8" height="89" rx="2.5"/></g></svg>
<!--TASKBAR-->
<div class="a" style="left:959px;top:1132.4px;width:728.2px;height:63.8px;border-radius:7px;background:#535353;box-shadow:0 1px 4px rgba(0,0,0,.5)"></div>
<div class="a" style="left:966.2px;top:1139.5px;width:7.8px;height:49.8px;border-radius:4px;background:#d9d9d9"></div>
<div class="fld" style="left:984.8px;top:1138.2px;width:274.4px;height:50.6px;background:#575757;border-color:#7b7b7b;border-radius:5px"></div>
<span class="t" style="left:1042.6px;top:1170.4px;font-size:22.6px;color:#f0f0f0">Generative Expand</span>
<div class="fld" style="left:1267.5px;top:1145.7px;width:275.5px;height:36.4px;border-color:#676767"></div>
<span class="t" style="left:1282px;top:1172.6px;font-size:22.4px;color:#ececec">Ratio</span>
<svg style="left:990px;top:1135px" width="700" height="60" viewBox="990 1135 700 60">
<g fill="#e2e2e2"><path d="M1004.700 1149.800h13v2.200h-10.800v11.600l6.400-4.800 5.400 4.400 2-1.400v13h-16z"/><circle cx="1011.400" cy="1156.200" r="1.900"/>
<path d="M1026.600 1149.400l1.700 4.300 4.300 1.700-4.300 1.700-1.700 4.300-1.700-4.300-4.300-1.700 4.300-1.700zM1020.800 1159.600l1.200 2.800 2.800 1.200-2.800 1.200-1.200 2.800-1.200-2.800-2.800-1.200 2.800-1.200z"/></g>
<path d="M1030.800 1162v12.800h-10" fill="none" stroke="#e2e2e2" stroke-width="1.800" stroke-dasharray="2.400 1.800"/>
<path d="M1523.600 1163.200l6.100 6.600 6.100-6.600" fill="none" stroke="#e2e2e2" stroke-width="2.300" stroke-linecap="round" stroke-linejoin="round"/>
<g fill="#e2e2e2" transform="translate(746.800 1088.600)"><rect x="819.400" y="72.700" width="5.200" height="13.100"/><rect x="846.200" y="72.700" width="5.100" height="13.100"/><path d="M826.600 72.700h3a6 6 0 0 0 12 0h2.900v13.100h-17.900z"/><path d="M831.400 72.700h8.400a4.200 4.200 0 0 1-8.400 0z"/><circle cx="825.700" cy="68.200" r="1.100"/><circle cx="829.900" cy="64.500" r="1.100"/><circle cx="835.400" cy="62.600" r="1.100"/><circle cx="840.900" cy="64.500" r="1.100"/><circle cx="845.100" cy="68.200" r="1.100"/></g>
<g fill="#e2e2e2"><circle cx="1643" cy="1164.400" r="3.100"/><circle cx="1652.300" cy="1164.400" r="3.100"/><circle cx="1661.500" cy="1164.400" r="3.100"/></g>
</svg>
<!--TOOLS-->
<div class="a" style="left:0;top:105.3px;width:73.9px;height:1525px;background:#3a3a3a"></div>
<div class="a" style="left:73.9px;top:105.3px;width:2px;height:1525px;background:#4b4b4b"></div>
<div class="a" style="left:75.9px;top:105.3px;width:1.3px;height:1525px;background:#353535"></div>
<div class="a" style="left:0;top:105.3px;width:71.9px;height:21.2px;background:#424242"></div>
<div class="a" style="left:0;top:126.5px;width:71.9px;height:1504px;background:#535353"></div>
<!--TOOLICONS-->
<svg style="left:0;top:100px" width="78" height="1530" viewBox="0 100 78 1530">
<g stroke="#dcdcdc" stroke-width="1.600" fill="none"><path d="M11 111.200l4.400 4.300-4.400 4.300M17.800 111.200l4.400 4.300-4.400 4.300"/></g>
<path d="M18.6 133v6.800M22.3 133v6.800M25.9 133v6.800M29.6 133v6.800M33.2 133v6.800M36.9 133v6.800M40.6 133v6.800M44.2 133v6.800M47.9 133v6.800M51.5 133v6.800" stroke="#424242" stroke-width="1.600"/>
<path d="M59 191.5v5.300h-5.300z" fill="#b4b4b4"/>
<path d="M59 239.5v5.300h-5.300z" fill="#b4b4b4"/>
<path d="M59 287.4v5.300h-5.300z" fill="#b4b4b4"/>
<path d="M59 335.4v5.300h-5.300z" fill="#b4b4b4"/>
<path d="M59 383.3v5.300h-5.300z" fill="#b4b4b4"/>
<path d="M59 479.3v5.300h-5.300z" fill="#b4b4b4"/>
<path d="M59 527.2v5.300h-5.300z" fill="#b4b4b4"/>
<path d="M59 575.2v5.300h-5.300z" fill="#b4b4b4"/>
<path d="M59 623.1v5.300h-5.300z" fill="#b4b4b4"/>
<path d="M59 671.1v5.300h-5.300z" fill="#b4b4b4"/>
<path d="M59 719.1v5.300h-5.300z" fill="#b4b4b4"/>
<path d="M59 767.0v5.300h-5.300z" fill="#b4b4b4"/>
<path d="M59 815.0v5.300h-5.300z" fill="#b4b4b4"/>
<path d="M59 910.9v5.300h-5.300z" fill="#b4b4b4"/>
<path d="M59 958.9v5.300h-5.300z" fill="#b4b4b4"/>
<path d="M59 1006.8v5.300h-5.300z" fill="#b4b4b4"/>
<path d="M59 1054.8v5.300h-5.300z" fill="#b4b4b4"/>
<path d="M59 1102.7v5.300h-5.300z" fill="#b4b4b4"/>
<path d="M59 1150.7v5.300h-5.300z" fill="#b4b4b4"/>
<path d="M59 1247.1v5.300h-5.300z" fill="#b4b4b4"/>
<path d="M59 1446.9v5.300h-5.300z" fill="#b4b4b4"/>
<path transform="translate(34.100 181.5)" d="M0-13.600l5 6.200h-3.900v6.300h6.300v-3.900l6.200 5-6.200 5v-3.900h-6.300v6.300h3.900l-5 6.200-5-6.200h3.900v-6.300h-6.300v3.900l-6.200-5 6.200-5v3.900h6.300v-6.300h-3.900z" fill="#e2e2e2"/>
<path d="M21.200 222.500v-5.600h6M31.700 216.900h6.800M42.800 216.900h6.100v5.600M48.900 225.600v5M48.900 233.800v4.800h-6.100M38.500 238.600h-6.800M27.200 238.600h-6v-4.800M21.200 230.600v-5" fill="none" stroke="#e2e2e2" stroke-width="2.200"/>
<g fill="#777" stroke="#e2e2e2" stroke-width="2.200" stroke-dasharray="0.100 3.560" stroke-linecap="round"><path d="M29.800 262.200a9.200 9.200 0 0 1 9.100 8.300l1.600 2.300a9.200 9.200 0 1 1-9.300 7.800l-1.600-.1a9.200 9.200 0 0 1 .2-18.300z"/></g>
<g transform="translate(48.9 260.6) rotate(38.5) scale(0.886)" fill="#e2e2e2" stroke="#535353" stroke-width=".9"><path d="M-.8 .5Q0-.8 .8 .5C2.4 6 3.3 15 3.3 21L-3.3 21C-3.3 15-1.6 6-.8 .5z"/><path d="M-3.3 22.6L3.3 22.6C8 26.5 8.4 33.5-2.5 38.8C-1.600 35-8 30-3.3 22.6z"/></g>
<rect x="23.300" y="311.100" width="22" height="21.700" fill="none" stroke="#e2e2e2" stroke-width="2.400" stroke-dasharray="2.200 2.170"/>
<rect x="27.800" y="315.700" width="12.600" height="12" fill="#e2e2e2"/>
<path d="M38.200 320.600v20.800l5-4.800 8.200-1.400z" fill="#e2e2e2" stroke="#535353" stroke-width="1.400" stroke-linejoin="round"/>
<rect x="7" y="350" width="57.600" height="44.600" rx="4.500" fill="#353535" stroke="#5d5d5d" stroke-width="1.200"/>
<g stroke="#ededed" stroke-width="3.700" stroke-linecap="round" fill="none"><path d="M26.400 358v21.200h10.400M31.600 363.300h11.400v21.600M18.300 363.300h1.700M48.100 379.200h1"/></g>
<g stroke="#e2e2e2" stroke-width="2" fill="none"><rect x="22.800" y="410.200" width="26.600" height="20.400"/><path d="M22.800 410.200l26.600 20.400M49.400 410.200l-26.600 20.400"/></g><g fill="#e2e2e2"><rect x="20.600" y="408" width="4.400" height="4.400"/><rect x="47.200" y="408" width="4.400" height="4.400"/><rect x="20.600" y="428.400" width="4.400" height="4.400"/><rect x="47.200" y="428.400" width="4.400" height="4.400"/></g>
<g transform="translate(34.800 468.500) rotate(45)"><rect x="-3.600" y="-19.400" width="7.200" height="12" rx="3.600" fill="#e2e2e2"/><rect x="-6.800" y="-9.800" width="13.600" height="5.400" fill="#e2e2e2"/><path d="M-2.600 -4.400v17.600a2.600 2.600 0 0 0 5.200 0v-17.600" fill="none" stroke="#e2e2e2" stroke-width="1.900"/></g>
<circle cx="27.100" cy="507" r="8.600" fill="none" stroke="#e2e2e2" stroke-width="1.800" stroke-dasharray="4.200 2.600"/>
<g transform="translate(34.800 516) rotate(-42)"><rect x="-16.5" y="-5.800" width="33" height="11.600" rx="5.800" fill="#e2e2e2" stroke="#535353" stroke-width="1.200"/><g fill="#4a4a4a"><circle cx="-2.300" cy="-2.300" r="1.400"/><circle cx="2.300" cy="-2.300" r="1.400"/><circle cx="-2.300" cy="2.300" r="1.400"/><circle cx="2.300" cy="2.300" r="1.400"/></g></g>
<g transform="translate(47.4 551.2) rotate(40.7) scale(1.0)" fill="#e2e2e2"><path d="M-.8 .5Q0-.8 .8 .5C2.4 6 3.3 15 3.3 21L-3.3 21C-3.3 15-1.6 6-.8 .5z"/><path d="M-3.3 22.6L3.3 22.6C8 26.5 8.4 33.5-2.5 38.8C-1.600 35-8 30-3.3 22.6z"/></g>
<path d="M35.700 599.200a6.300 6.300 0 0 1 6.300 6.300c0 2.400-1.600 4-2.200 6.200-.5 1.800-.2 3.800.6 5.200h5c2 0 3 1 3 3v3.700h-24.600v-3.700c0-2 1-3 3-3h4.200c.8-1.400 1.100-3.400.6-5.200-.6-2.200-2.200-3.800-2.200-6.200a6.300 6.300 0 0 1 6.300-6.300z" fill="#e2e2e2"/><rect x="26" y="624.900" width="20.400" height="2.200" fill="#e2e2e2"/>
<g transform="translate(49.2 646.8) rotate(42) scale(0.93)" fill="#e2e2e2"><path d="M-.8 .5Q0-.8 .8 .5C2.4 6 3.3 15 3.3 21L-3.3 21C-3.3 15-1.6 6-.8 .5z"/><path d="M-3.3 22.6L3.3 22.6C8 26.5 8.4 33.5-2.5 38.8C-1.600 35-8 30-3.3 22.6z"/></g>
<path d="M38.200 653.200c-4.400-3-9.400-2.400-12.800 1" fill="none" stroke="#e2e2e2" stroke-width="1.700"/><path d="M18.600 658.200l7.600-6.800 2 6.800z" fill="#e2e2e2"/><g fill="#e2e2e2"><circle cx="47" cy="659.700" r="1.100"/><circle cx="46.600" cy="663.600" r="1.100"/><circle cx="44.800" cy="667.200" r="1.100"/><circle cx="41.500" cy="670.200" r="1.100"/></g>
<path d="M39 696l8.200 8.600-10.400 9.400-8.800-8.200z" fill="#e2e2e2"/><path d="M28 705.800l-6.600 6.200 5.200 7.800h6l4.200-5.800" fill="none" stroke="#e2e2e2" stroke-width="2"/><path d="M26 719.800h21.600" stroke="#e2e2e2" stroke-width="2.200"/>
<defs><linearGradient id="gr" x1="0" x2="1" y1="0" y2="0"><stop offset="0" stop-color="#1c1c1c"/><stop offset="1" stop-color="#c8c8c8"/></linearGradient></defs>
<rect x="21.100" y="744" width="27.900" height="21.800" fill="url(#gr)" stroke="#e6e6e6" stroke-width="2"/>
<path d="M33.800 789.400c1.600 5 10.600 10.600 10.600 18.400a9.300 9.300 0 0 1-18.600 0c0-7.800 6.400-13.400 8-18.400z" fill="#e2e2e2"/>
<g transform="translate(45 837.6) rotate(41) scale(0.93)" fill="#e2e2e2"><path d="M-.8 .5Q0-.8 .8 .5C2.4 6 3.3 15 3.3 21L-3.3 21C-3.3 15-1.6 6-.8 .5z"/><path d="M-3.3 22.6L3.3 22.6C8 26.5 8.4 33.5-2.5 38.8C-1.600 35-8 30-3.3 22.6z"/></g>
<circle cx="43.700" cy="859" r="6.600" fill="none" stroke="#e2e2e2" stroke-width="2.200"/><path d="M48.400 854.300A6.600 6.600 0 0 1 39 863.700z" fill="#e2e2e2"/>
<circle cx="38.400" cy="896.700" r="9.600" fill="#e2e2e2"/><path d="M32 903.600l-10.600 10" stroke="#e2e2e2" stroke-width="3.200" stroke-linecap="round"/>
<path d="M22.800 960.600l5.800-16.600 10.400-4.400 7.400 9.800-7 9.600z" fill="none" stroke="#e2e2e2" stroke-width="2.100" stroke-linejoin="round"/><path d="M23.400 960l10.400-9" stroke="#e2e2e2" stroke-width="1.800"/><circle cx="34.700" cy="950.200" r="2.400" fill="#e2e2e2"/><path d="M41.800 934.600l8.200 8.600-4.200 4.400-8.600-8.600z" fill="#e2e2e2"/>

<path d="M35 1047l4.6 9.8" stroke="#ececec" stroke-width="5"/><path d="M28.2 1031.4v22.6l6.6-5.8 9.600-.8z" fill="#000" stroke="#ececec" stroke-width="1.800" stroke-linejoin="round"/>
<rect x="21.100" y="1079.700" width="27.900" height="21.600" fill="#757575" stroke="#e6e6e6" stroke-width="2"/>
<g stroke="#e2e2e2" stroke-width="3.200" stroke-linecap="round" fill="none"><path d="M30.400 1129.400v12M36 1126.200v14M42 1127.600v13M48.200 1134l-1.600 9"/><path d="M22 1140.600l7.600 8.400" stroke-width="3.800"/></g><path d="M28.600 1140.400h20.200c0 8-4 14.600-11.400 14.600-5 0-7.600-3-10-7.400z" fill="#e2e2e2"/>
<circle cx="31.600" cy="1184.200" r="10.200" fill="none" stroke="#e2e2e2" stroke-width="2.500"/><path d="M39.400 1192l9.200 9" stroke="#e2e2e2" stroke-width="3.600" stroke-linecap="round"/>
<g fill="#e2e2e2"><circle cx="23.800" cy="1235" r="3.600"/><circle cx="35" cy="1235" r="3.600"/><circle cx="46.300" cy="1235" r="3.600"/></g>
<rect x="13.600" y="1277.600" width="13.400" height="12.400" fill="#fff" stroke="#111" stroke-width="2" /><rect x="12.100" y="1276.100" width="16.400" height="15.400" fill="none" stroke="#d8d8d8" stroke-width="1.200"/><rect x="7.300" y="1270" width="13.600" height="12.800" fill="#000" stroke="#d8d8d8" stroke-width="1.300"/>
<path d="M47.500 1276.200c5-1 8.800 1.600 9 7" fill="none" stroke="#e2e2e2" stroke-width="3.600"/><path d="M42 1276.600l8.600-7.400 1.400 11.400z" fill="#e2e2e2"/><path d="M50.800 1282.400h11.800l-5.800 7z" fill="#e2e2e2"/>
<rect x="27" y="1317.600" width="34.400" height="34.600" fill="#fff" stroke="#1e1e1e" stroke-width="1.200"/>
<rect x="8.500" y="1299.600" width="35.200" height="34.600" fill="#fff" stroke="#1e1e1e" stroke-width="1.200"/><rect x="11.400" y="1302.400" width="29.400" height="29" fill="#21e021"/>
<rect x="19.300" y="1374.400" width="29.700" height="22.300" fill="none" stroke="#e2e2e2" stroke-width="2"/><circle cx="34.100" cy="1385.600" r="7.400" fill="none" stroke="#e2e2e2" stroke-width="2" stroke-dasharray="0.100 3.320" stroke-linecap="round"/>
<g fill="#535353" stroke="#e2e2e2" stroke-width="2"><rect x="19.300" y="1428.200" width="19.700" height="16.100"/><rect x="29" y="1422.500" width="20" height="16"/></g><path d="M19.300 1429h9M29 1423.600h20" stroke="#e2e2e2" stroke-width="3.400"/>
<path d="M38.600 1481.200a8 8 0 1 0-13.400 8.600" fill="none" stroke="#e2e2e2" stroke-width="2.400"/><path d="M21.600 1490.400h7.200v5.200z" fill="#e2e2e2"/><path d="M38.400 1482.400l1.300 3 3 1.300-3 1.300-1.300 3-1.300-3-3-1.300 3-1.300z" fill="#e2e2e2"/><rect x="33.300" y="1492.500" width="16.800" height="11.600" fill="none" stroke="#e2e2e2" stroke-width="1.900"/><path d="M34.500 1503l4.600-5.200 3 3 2-2 4.600 4.200z" fill="#e2e2e2"/><circle cx="45.500" cy="1496.200" r="1.300" fill="#e2e2e2"/><circle cx="46" cy="1479.500" r="6.600" fill="#3890f5"/>
</svg>
<span class="t b" style="left:23.9px;top:1008.6px;font-size:38.6px;font-family:'Liberation Serif',serif;color:#e2e2e2;transform:translateY(-0.8465em) scaleX(.86);transform-origin:50% 50%">T</span>
<!--STATUS-->
<div class="a" style="left:76.5px;top:1298px;width:2492.5px;height:30px;background:#4d4d4d"></div>
<div class="a" style="left:76.5px;top:1298px;width:110.7px;height:30px;background:#4a4a4a"></div>
<div class="a" style="left:187.2px;top:1298px;width:339.5px;height:30px;background:#575757"></div>
<span class="t" style="left:92.6px;top:1322.9px;font-size:22px;letter-spacing:.72px;color:#ececec">33.33%</span>
<span class="t" style="left:225.8px;top:1321px;font-size:19.9px;color:#dcdcdc">2172 px x 2500 px (72 ppi)</span>
<svg style="left:500px;top:1298px" width="30" height="30" viewBox="500 1298 30 30"><path d="M509.5 1306.5l4.3 7-4.3 7" stroke="#d8d8d8" stroke-width="1.7" fill="none"/></svg>
<div class="a" style="left:1068px;top:1302.6px;width:960px;height:19.6px;border-radius:10px;background:#6b6b6b"></div>
<div class="a" style="left:2568.7px;top:1298px;width:31.3px;height:30px;background:#535353"></div>
<div class="a" style="left:76.5px;top:1328px;width:2523.5px;height:5.5px;background:#3f3f3f"></div>
<!--TIMELINE-->
<div class="a" style="left:76.5px;top:1333.4px;width:2523.5px;height:50.6px;background:#424242"></div>
<div class="a" style="left:76.5px;top:1333.4px;width:117px;height:51px;background:#535353"></div>
<span class="t b" style="left:93.6px;top:1364.5px;font-size:20.2px;color:#f2f2f2">Timeline</span>
<div class="a" style="left:76.5px;top:1384px;width:2523.5px;height:246px;background:#535353"></div>
<div class="a" style="left:193.5px;top:1383px;width:2406.5px;height:1.6px;background:#3a3a3a"></div>
<div class="a" style="left:76.5px;top:1452.6px;width:2523.5px;height:1.8px;background:#404040"></div>
<div class="a" style="left:76.5px;top:1592px;width:2492.5px;height:36px;background:#4a4a4a"></div>
<div class="a" style="left:76.5px;top:1592px;width:781px;height:36px;background:#525252;border-top:1.6px solid #404040"></div>
<div class="a" style="left:620.8px;top:1590px;width:183px;height:4px;background:#535353;border-top:1.2px solid #474747"></div>
<div class="a" style="left:562px;top:1593.6px;width:1.4px;height:34px;background:#404040"></div>
<div class="a" style="left:76.5px;top:1628px;width:2523.5px;height:2px;background:#3a3a3a"></div>
<!--TLICONS-->
<div class="vsep" style="left:424.2px;top:1390.5px;height:57.5px;width:1.6px;background:#3f3f3f"></div>
<div class="vsep" style="left:564.4px;top:1386.6px;height:66px;width:1.6px;background:#3f3f3f"></div>
<div class="vsep" style="left:2517.6px;top:1386.6px;height:66px;width:1.6px;background:#3f3f3f"></div>
<div class="fld" style="left:1191px;top:1501px;width:256.2px;height:43.2px;background:#484848;border-color:#686868;border-radius:4px"></div>
<div class="fld" style="left:1451px;top:1501px;width:34px;height:43.2px;background:#484848;border-color:#686868;border-radius:4px"></div>
<span class="t" style="left:1221.4px;top:1529.6px;font-size:20px;color:#ececec">Create Video Timeline</span>
<svg style="left:76px;top:1340px" width="2524" height="290" viewBox="76 1340 2524 290">
<g fill="#9b9b9b"><rect x="93.400" y="1412" width="3.400" height="16.400"/><path d="M115 1412v16.400l-15.600-8.200z"/>
<path d="M164.600 1412v16.400l-15.600-8.200z"/><rect x="167.600" y="1412" width="3.600" height="16.400"/>
<path d="M211 1410.400l17.800 9.500-17.800 9.500z"/>
<rect x="267.500" y="1412" width="3.600" height="16.400"/><path d="M274 1412l14 8.200-14 8.200z"/>
<path d="M322.600 1416.400h5.400l9.400-6.400v20.400l-9.400-6.400h-5.400z"/>
<g transform="translate(389.800 1420.200)"><path fill-rule="evenodd" d="M0-7.400A7.400 7.400 0 1 0 0 7.400 7.400 7.400 0 1 0 0-7.400zM0-3.200A3.200 3.200 0 1 1 0 3.200 3.200 3.200 0 1 1 0-3.200z"/><g id="gt2"><rect x="-1.900" y="-10.600" width="3.800" height="4.600" rx="1"/><rect x="-1.900" y="6" width="3.800" height="4.600" rx="1"/></g><use href="#gt2" transform="rotate(45)"/><use href="#gt2" transform="rotate(90)"/><use href="#gt2" transform="rotate(135)"/></g>
<path d="M402.400 1433.600h6.400l-3.200 3.400z" fill="#777"/></g>
<g stroke="#bdbdbd" stroke-width="2.200" fill="none" stroke-linecap="round"><circle cx="450" cy="1412.400" r="3.800"/><circle cx="450" cy="1426.600" r="3.800"/><path d="M453.400 1414.400l21 12.400M453.400 1424.600l21-12.400"/></g>
<rect x="508.400" y="1409.300" width="21.200" height="20.800" fill="none" stroke="#bdbdbd" stroke-width="2"/><path d="M527.600 1411.300v16.800h-17z" fill="#bdbdbd"/>
<path d="M2570 1352.400h18.800M2570 1356.200h18.800M2570 1360h18.800M2570 1363.800h18.800" stroke="#dcdcdc" stroke-width="1.900"/>
<path d="M1459.400 1517.400l8.800 9.200 8.800-9.200" fill="none" stroke="#e6e6e6" stroke-width="2.200"/>
<g fill="none" stroke="#a8a8a8" stroke-width="1.400"><rect x="89.300" y="1605.500" width="7.600" height="10"/><rect x="100.500" y="1605.500" width="7.600" height="10"/><rect x="111.700" y="1605.500" width="7.600" height="10"/></g>
<path d="M158.600 1599.600l11.200 8.400-11.200 8.400v-4.800c-6-.4-10 1.600-13.200 7.200.4-8 4.800-13.600 13.200-14.400z" fill="#a8a8a8"/>
<path d="M584.200 1616l6-7.200 3.200 3.400 3.600-5.600 5.800 9.400z" fill="#a8a8a8"/>
<rect x="640" y="1600.300" width="143.800" height="5.600" fill="#858585"/>
<path d="M815 1615.400l10.400-10.200 4.600 4.200 5.400-7.400 11.200 13.400z" fill="#a8a8a8"/>
</svg>
<!--PANELS-->
<div class="a" style="left:1965px;top:159px;width:604px;height:23px;background:#424242;border-radius:0 5px 0 0;box-shadow:0 0 0 1px #333"></div>
<div class="a" id="lp" style="left:1965px;top:159px;width:457px;height:464.5px;background:#535353;box-shadow:0 2px 10px 2px rgba(0,0,0,.5),0 0 0 1px #353535"></div>
<div class="a" style="left:1965px;top:159px;width:457px;height:23px;background:#424242"></div>
<div class="a" style="left:2422px;top:159px;width:147px;height:23px;background:#424242;border-radius:0 5px 0 0"></div>
<div class="a" style="left:1965px;top:182px;width:457px;height:51.4px;background:#424242;border-top:1px solid #3a3a3a"></div>
<div class="a" style="left:1965px;top:182px;width:96.6px;height:51.6px;background:#535353"></div>
<div class="a" style="left:2061.4px;top:182px;width:1.4px;height:51px;background:#383838"></div>
<div class="a" style="left:2166.6px;top:182px;width:1.4px;height:51px;background:#383838"></div>
<div class="a" style="left:2271.8px;top:182px;width:1.4px;height:51px;background:#383838"></div>
<div class="a" style="left:2061.4px;top:232.2px;width:360.6px;height:1.4px;background:#383838"></div>
<span class="t b" style="left:1982.2px;top:214px;font-size:19.4px;letter-spacing:-.32px;color:#f4f4f4">Layers</span>
<span class="t b" style="left:2078.2px;top:214px;font-size:19.4px;letter-spacing:-.21px;color:#b9b9b9">Actions</span>
<span class="t b" style="left:2185.4px;top:214px;font-size:19.4px;letter-spacing:.13px;color:#b9b9b9">History</span>
<div class="a" style="left:1965px;top:290.6px;width:457px;height:1.8px;background:#434343"></div>
<div class="a" style="left:1965px;top:341.6px;width:457px;height:1.8px;background:#434343"></div>
<div class="fld" style="left:1972px;top:250.5px;width:162px;height:33.8px"></div>
<span class="t" style="left:2012px;top:273.8px;font-size:19px;color:#ececec">Kind</span>
<div class="fld" style="left:1972px;top:302.2px;width:240.3px;height:33.4px"></div>
<span class="t" style="left:1986.2px;top:325.6px;font-size:19.6px;color:#ececec">Normal</span>
<span class="t" style="left:2219.6px;top:325.6px;font-size:19.6px;color:#d6d6d6">Opacity:</span>
<div class="fld" style="left:2297.3px;top:302.8px;width:95px;height:31px"></div>
<div class="a" style="left:2363.6px;top:303.6px;width:1.5px;height:29.4px;background:#686868"></div>
<span class="t" style="left:2304.4px;top:325.6px;font-size:19px;color:#ececec">100%</span>
<span class="t" style="left:1975.4px;top:376.9px;font-size:19.6px;color:#d6d6d6">Lock:</span>
<span class="t" style="left:2262.6px;top:376.9px;font-size:19.6px;color:#d6d6d6">Fill:</span>
<div class="fld" style="left:2297.3px;top:354px;width:95px;height:31.2px"></div>
<div class="a" style="left:2363.6px;top:354.8px;width:1.5px;height:29.6px;background:#686868"></div>
<span class="t" style="left:2304.4px;top:376.9px;font-size:19px;color:#ececec">100%</span>
<div class="a" style="left:1965px;top:396px;width:457px;height:166px;background:#4a4a4a"></div>
<div class="a" style="left:1965px;top:400px;width:56.6px;height:75px;background:#535353"></div>
<div class="a" style="left:2021.6px;top:400px;width:371.8px;height:75px;background:#696969"></div>
<div class="a" style="left:1965px;top:475px;width:428.4px;height:1.4px;background:#454545"></div>
<div class="a" style="left:2024.6px;top:403.4px;width:62.6px;height:67.5px;background:#fff"></div>
<div class="a" style="left:2028.2px;top:407.1px;width:55.1px;height:60.7px;background:#1c1c1c"></div>
<div class="a" style="left:2030.2px;top:409.2px;width:50.1px;height:56.5px;background:#fff"></div>
<!--THUMB-->
<svg style="left:2030px;top:409px" width="52" height="57" viewBox="2030 409 52 57"><defs><filter id="tn" x="-10%" y="-10%" width="120%" height="120%"><feTurbulence type="fractalNoise" baseFrequency=".55" numOctaves="2" seed="3" result="n"/><feColorMatrix in="n" type="matrix" values="1.1 0 0 0 .38  1.1 0 0 0 .38  1.1 0 0 0 .36  0 0 0 0 1" result="g"/><feComposite in="SourceGraphic" in2="g" operator="arithmetic" k1="1.1" k2="0" k3="0" k4="0" result="t"/><feDisplacementMap in="t" in2="n" scale="3.4" xChannelSelector="R" yChannelSelector="G"/></filter></defs>
<path filter="url(#tn)" fill-rule="evenodd" fill="#c48444" d="M2034.400 414.400H2075.400V461.300H2034.400zM2041.100 419.700V454.900H2069V419.700z"/></svg>
<span class="t" style="left:2096.6px;top:444.7px;font-size:19.5px;color:#f2f2f2">Layer 0</span>
<div class="a" style="left:1965px;top:561.4px;width:457px;height:1.6px;background:#424242"></div>
<div class="a" style="left:1965px;top:563px;width:457px;height:46px;background:#535353"></div>
<div class="a" style="left:1965px;top:609px;width:457px;height:3.2px;background:#3d3d3d"></div>
<div class="a" style="left:1965px;top:612.2px;width:457px;height:11.3px;background:#505050"></div>
<!--PANELICONS-->
<svg style="left:1960px;top:155px" width="470" height="475" viewBox="1960 155 470 475">
<g stroke="#d2d2d2" stroke-width="1.8" fill="none"><path d="M1975.2 166.2l10.6 10.6M1985.8 166.2l-10.6 10.6"/><path d="M2405.4 166.8l-4.2 4.2 4.2 4.2M2412 166.8l-4.2 4.2 4.2 4.2" stroke-width="1.5"/></g>
<path d="M2393.4 202.1H2412M2393.4 205.9H2412M2393.4 209.7H2412M2393.4 213.5H2412" stroke="#cfcfcf" stroke-width="1.6"/>
<g stroke="#dedede" stroke-width="2.2" fill="none" stroke-linecap="round" stroke-linejoin="round"><path d="M2115 266.2l6 6.4 6-6.4M2194 317.6l5.8 6.2 5.8-6.2M2373 315.6l6 6.2 6-6.2M2373 367l6 6.2 6-6.2"/></g>
<g stroke="#dedede" stroke-width="2.5" fill="none" stroke-linecap="round"><circle cx="1996.2" cy="266.6" r="6.4"/><path d="M2001 271.6l5.2 5.4" stroke-width="3"/></g>
<rect x="2156" y="258.5" width="21.5" height="17.4" fill="none" stroke="#dedede" stroke-width="2"/><path d="M2159.2 273.4l5-7.6 3.3 4.4 2.6-3.2 5 6.4z" fill="#dedede"/>
<circle cx="2210.5" cy="267" r="9.2" fill="none" stroke="#dedede" stroke-width="2"/><path d="M2217 260.5A9.2 9.2 0 0 1 2204 273.5z" fill="#dedede"/>

<g fill="none" stroke="#dedede" stroke-width="1.9"><rect x="2291.4" y="259.4" width="16" height="16"/></g><g fill="#535353" stroke="#dedede" stroke-width="1.5"><rect x="2289.4" y="257.4" width="4.2" height="4.2"/><rect x="2305.2" y="257.4" width="4.2" height="4.2"/><rect x="2289.4" y="273.2" width="4.2" height="4.2"/><rect x="2305.2" y="273.2" width="4.2" height="4.2"/></g>
<path d="M2340.6 258.4h7.6l5 5v11.6h-6.6" fill="none" stroke="#dedede" stroke-width="1.9"/><path d="M2347.6 258.4v5.6h5.6" fill="none" stroke="#dedede" stroke-width="1.5"/><rect x="2334.6" y="267.6" width="10.6" height="10.6" fill="#dedede"/>
<rect x="2376.6" y="253.8" width="16.8" height="30.2" rx="8.4" fill="#484848" stroke="#5c5c5c" stroke-width="1.4"/><circle cx="2384.9" cy="259" r="7.4" fill="#dcdcdc"/>
<rect x="2035" y="360.5" width="20.2" height="20.4" fill="#dedede"/><g fill="#4a4a4a"><rect x="2037.4" y="363" width="4.6" height="4.6"/><rect x="2048.2" y="363" width="4.6" height="4.6"/><rect x="2042.8" y="368.4" width="4.6" height="4.6"/><rect x="2037.4" y="373.8" width="4.6" height="4.6"/><rect x="2048.2" y="373.8" width="4.6" height="4.6"/></g>
<g transform="translate(2098.2 358.5) rotate(42) scale(.885)" fill="#dedede"><path d="M0 0C1.600 5 2.700 15 2.700 21L-2.700 21C-2.700 15-.500 5 0 0z"/><path d="M-2.700 22.500L2.700 22.500C7 26.500 7.600 33-2.500 38.500C-1.800 35-7 29.500-2.700 22.500z"/></g>
<g fill="#dedede"><path d="M2125.1 358.600l4.800 5.600h-3.900v5.400h5.400v-3.900l5.600 4.800-5.600 4.800v-3.900h-5.400v5.400h3.900l-4.800 5.600-4.800-5.600h3.900v-5.400h-5.400v3.900l-5.600-4.800 5.600-4.800v3.900h5.400v-5.400h-3.900z"/></g>
<path d="M2158.800 363.300h10.400l5 5v8.200h-15.400z" fill="none" stroke="#dedede" stroke-width="2.2"/><path d="M2168.600 363.300v6h6z" fill="#dedede"/><g fill="#dedede"><rect x="2157" y="358.600" width="2.400" height="2.400"/><rect x="2174" y="358.600" width="2.400" height="2.400"/><rect x="2153.600" y="362.200" width="2.400" height="2.400"/><rect x="2153.600" y="375.200" width="2.400" height="2.400"/><rect x="2177.400" y="362.200" width="2.400" height="2.400"/><rect x="2177.400" y="375.200" width="2.400" height="2.400"/><rect x="2157" y="378.800" width="2.400" height="2.400"/><rect x="2174" y="378.800" width="2.400" height="2.400"/></g>
<rect x="2197.900" y="366.400" width="18.700" height="14.400" rx="1.600" fill="#dedede"/><path d="M2202.400 367v-2a4.850 4.850 0 0 1 9.700 0v2" fill="none" stroke="#dedede" stroke-width="2.600"/><circle cx="2207.250" cy="372.900" r="1.900" fill="#4a4a4a"/>
<path d="M1981.800 438.500c3-4.800 7.200-7.200 11.800-7.200s8.800 2.400 11.800 7.200c-3 4.800-7.200 7.200-11.800 7.200s-8.800-2.400-11.800-7.200z" fill="#e2e2e2"/><circle cx="1993.600" cy="438.300" r="4.700" fill="#4e4e4e"/><circle cx="1994.600" cy="436.800" r="1.500" fill="#e2e2e2"/>
<g fill="none" stroke="#8c8c8c" stroke-width="2.200"><rect x="2048.100" y="580.100" width="14" height="11.400" rx="5.700"/><rect x="2058.200" y="580.100" width="14" height="11.400" rx="5.700"/></g><path d="M2054.500 585.800h11.200" stroke="#8c8c8c" stroke-width="2.400"/>
<path d="M2120 597.300h8l-4 4.200zM2220.400 597.300h8l-4 4.200z" fill="#e6e6e6"/>
<rect x="2149" y="576" width="23.500" height="18" rx="1.500" fill="#dedede"/><ellipse cx="2160.750" cy="585" rx="6" ry="5.400" fill="#3e3e3e"/>
<circle cx="2210.500" cy="585.200" r="9.300" fill="none" stroke="#dedede" stroke-width="2"/><path d="M2217.100 578.600A9.300 9.300 0 0 1 2203.900 591.800z" fill="#dedede"/>
<path d="M2248.600 578.200c0-1.200.6-2 2-2h6.400l2.400 2.600h9.800c1.200 0 1.800.6 1.800 1.800v12c0 1.200-.6 1.800-1.800 1.800h-18.800c-1.200 0-1.800-.6-1.800-1.800z" fill="#dedede"/><path d="M2250 579.400h20.800" stroke="#535353" stroke-width="1.200"/>
<rect x="2300.300" y="576" width="18.800" height="19" fill="none" stroke="#e6e6e6" stroke-width="2.200"/><path d="M2309.700 580.600v9.800M2304.800 585.500h9.800" stroke="#e6e6e6" stroke-width="2"/>
<g fill="none" stroke="#8c8c8c" stroke-width="1.900"><path d="M2349 578.400h20.400M2355 578v-3.200h8.400v3.200M2351.400 580.400l.8 15.400h14l.8-15.400M2355.600 583v10M2359.200 583v10M2362.800 583v10"/></g>
<g stroke="#3d3d3d" stroke-width="1.500"><path d="M2176.500 614v8M2179.700 614v8M2182.900 614v8M2186.100 614v8M2189.300 614v8M2192.500 614v8M2195.700 614v8M2198.900 614v8M2202.100 614v8M2205.300 614v8M2208.500 614v8"/></g>
</svg>
<span class="t" style="left:2099.500px;top:596.400px;font-size:27px;font-style:italic;color:#dedede;letter-spacing:-.5px">fx</span>
<div class="a" style="left:2422px;top:182px;width:147px;height:254px;background:#3b3b3b"></div>
<div class="a" style="left:2422px;top:436px;width:74.5px;height:76.4px;background:#3b3b3b;box-shadow:0 2px 8px rgba(0,0,0,.5)"></div>
<div class="a" style="left:2426.3px;top:182.4px;width:69.2px;height:125.6px;background:#535353"></div>
<div class="a" style="left:2500px;top:182.4px;width:68.8px;height:125.6px;background:#535353"></div>
<div class="a" style="left:2426.3px;top:309.8px;width:69.2px;height:125.6px;background:#535353"></div>
<div class="a" style="left:2500px;top:309.8px;width:68.8px;height:125.6px;background:#535353"></div>
<div class="a" style="left:2426.3px;top:437.2px;width:69.2px;height:74.2px;background:#535353"></div>
<span class="t b" style="left:2245.4px;top:276.7px;font-size:28.4px;font-family:'Liberation Serif',serif;color:#dedede">T</span>
<!--DOCKICONS-->
<svg style="left:2420px;top:155px" width="180" height="370" viewBox="2420 155 180 370">
<path d="M2443.9 187.7v8M2447.8 187.7v8M2451.7 187.7v8M2455.6 187.7v8M2459.5 187.7v8M2463.4 187.7v8M2467.3 187.7v8M2471.2 187.7v8M2475.1 187.7v8M2479.0 187.7v8" stroke="#434343" stroke-width="1.6"/><path d="M2517.6 187.7v8M2521.5 187.7v8M2525.4 187.7v8M2529.3 187.7v8M2533.2 187.7v8M2537.1 187.7v8M2541.0 187.7v8M2544.9 187.7v8M2548.8 187.7v8M2552.7 187.7v8" stroke="#434343" stroke-width="1.6"/><path d="M2443.9 314.6v8M2447.8 314.6v8M2451.7 314.6v8M2455.6 314.6v8M2459.5 314.6v8M2463.4 314.6v8M2467.3 314.6v8M2471.2 314.6v8M2475.1 314.6v8M2479.0 314.6v8" stroke="#434343" stroke-width="1.6"/><path d="M2517.6 314.6v8M2521.5 314.6v8M2525.4 314.6v8M2529.3 314.6v8M2533.2 314.6v8M2537.1 314.6v8M2541.0 314.6v8M2544.9 314.6v8M2548.8 314.6v8M2552.7 314.6v8" stroke="#434343" stroke-width="1.6"/><path d="M2443.9 442v8M2447.8 442v8M2451.7 442v8M2455.6 442v8M2459.5 442v8M2463.4 442v8M2467.3 442v8M2471.2 442v8M2475.1 442v8M2479.0 442v8" stroke="#434343" stroke-width="1.6"/>
<g stroke="#d2d2d2" stroke-width="1.500" fill="none"><path d="M2472.800 166.800l4.200 4.200-4.200 4.200M2479.400 166.800l4.200 4.200-4.200 4.200M2544.400 166.800l4.200 4.200-4.200 4.200M2551 166.800l4.200 4.200-4.200 4.200"/></g>
<g stroke="#dedede" stroke-width="1.800" fill="#535353"><path d="M2446 214.600h30M2446 223.800h30M2446 233h30"/><circle cx="2454.500" cy="214.600" r="3.300"/><circle cx="2467.300" cy="223.800" r="3.300"/><circle cx="2457.800" cy="233" r="3.300"/></g>
<circle cx="2461.300" cy="275.900" r="14" fill="none" stroke="#dedede" stroke-width="2.400"/><path d="M2461.300 273v10.600" stroke="#dedede" stroke-width="2.600"/><circle cx="2461.300" cy="268.400" r="1.700" fill="#dedede"/>
<path d="M2517.8 233.2V220.2H2519.7V227.7H2521.5V216.7H2523.6V224.1H2525.2V227.5H2527.0V222.0H2528.8V214.9H2530.9V223.8H2532.7V219.0H2534.5V213.1H2536.2V219.0H2538.0V223.8H2539.8V220.2H2541.9V214.9H2544.0V225.6H2545.8V222.0H2547.6V225.6H2549.0V218.5H2551.3V233.2z" fill="#dedede"/>
<g stroke="#dedede" fill="none"><circle cx="2534.400" cy="275.600" r="9.600" stroke-width="2.200"/><circle cx="2534.400" cy="275.600" r="3.200" stroke-width="1.800"/><path d="M2534.400 258v35.200M2516.800 275.600h35.200M2522 263.200l24.800 24.800M2546.800 263.200l-24.800 24.800" stroke-width="1.900"/></g>
<path fill-rule="evenodd" d="M2461 339.200c9.600 0 17 5 17 12 0 6.800-7.400 12.400-17.400 12.400-9.600 0-16.600-4-16.600-9.600 0-3 2.400-5 5.400-5 1.800 0 2.600-.8 2.600-2.400 0-4.400 4-7.400 9-7.400zM2462.600 343.200a2.500 2.500 0 1 0 .1 0zM2470.800 347.400a2.500 2.500 0 1 0 .1 0zM2471.400 354.400a2.500 2.500 0 1 0 .1 0zM2464.200 357.600a2.500 2.500 0 1 0 .1 0zM2455.600 357a2.700 2.700 0 1 0 .1 0z" fill="#dedede"/>
<circle cx="2534" cy="351.800" r="12.800" fill="none" stroke="#dedede" stroke-width="2.400"/><path d="M2543 342.800A12.800 12.800 0 0 1 2525 360.800z" fill="#dedede"/>
<rect x="2447.800" y="390.800" width="28" height="22.400" fill="#dedede"/><g><rect x="2449.800" y="392.800" width="7" height="5" fill="#9a9a9a"/><rect x="2458.600" y="392.800" width="7" height="5" fill="#707070"/><rect x="2467.400" y="392.800" width="6.600" height="5" fill="#555"/><rect x="2449.800" y="399.600" width="7" height="5" fill="#777"/><rect x="2458.600" y="399.600" width="7" height="5" fill="#555"/><rect x="2467.400" y="399.600" width="6.600" height="5" fill="#444"/><rect x="2449.800" y="406.400" width="7" height="5" fill="#4a4a4a"/><rect x="2458.600" y="406.400" width="7" height="5" fill="#3c3c3c"/><rect x="2467.400" y="406.400" width="6.600" height="5" fill="#333"/></g>
<g fill="none" stroke-width="2"><path d="M2525.4 411.400h-2.200c-1.200 0-1.800-.600-1.800-1.800v-19.400c0-1.200.600-1.800 1.800-1.800h18.400c1.200 0 1.800.600 1.800 1.800v2.200" stroke="#bdbdbd"/><rect x="2526.400" y="393.400" width="22.400" height="22.800" rx="1.800" stroke="#dedede"/></g><path d="M2537.400 393.800h7v11.600l-3.500-3.200-3.500 3.200z" fill="#dedede"/>
<g fill="#dedede"><rect x="2442.800" y="463.400" width="3.400" height="3.400"/><rect x="2442.800" y="469.400" width="3.400" height="3.400"/><rect x="2442.800" y="475.400" width="3.400" height="3.400"/><rect x="2448.400" y="464.200" width="7.600" height="1.800"/><rect x="2448.400" y="470.200" width="7.600" height="1.800"/><rect x="2448.400" y="476.200" width="5" height="1.800"/>
<path d="M2466.200 465.600a4.900 4.900 0 0 1 4.900 4.900c0 2-1.200 3.400-1.800 5.200-.4 1.200-.2 2.400.4 3.200h5.200c1.600 0 2.600 1 2.600 2.600v4.100h-22.600v-4.100c0-1.600 1-2.600 2.600-2.600h5.200c.6-.8.800-2 .4-3.200-.6-1.800-1.800-3.200-1.800-5.200a4.900 4.900 0 0 1 4.900-4.900z"/><rect x="2455.600" y="487.600" width="21.600" height="2"/><rect x="2455.600" y="491.600" width="21.600" height="2"/></g>
</svg>
<!--ANNOT-->
<svg style="left:1650px;top:150px" width="500" height="300" viewBox="1650 150 500 300">
<defs><filter id="ash" x="-10%" y="-10%" width="120%" height="130%"><feDropShadow dx="0" dy="3" stdDeviation="3" flood-color="#000" flood-opacity=".45"/></filter></defs>
<path d="M1968.1 164.9C1974.2 164.9 1991.8 164.6 2004.5 164.9C2017.1 165.3 2032.6 165.8 2044.3 166.9C2055.9 168.0 2065.8 169.4 2074.1 171.4C2082.4 173.4 2088.5 176.1 2094.0 178.9C2099.5 181.6 2103.8 184.2 2106.9 187.8C2110.1 191.5 2112.6 196.3 2112.9 200.7C2113.2 205.2 2112.1 209.9 2108.9 214.7C2105.8 219.5 2099.8 225.5 2094.0 229.6C2088.2 233.7 2082.4 236.6 2074.1 239.6C2065.8 242.5 2054.2 245.7 2044.3 247.5C2034.3 249.3 2022.7 250.2 2014.4 250.5C2006.1 250.8 2002.8 250.3 1994.5 249.5C1986.2 248.7 1973.8 247.5 1964.7 245.5C1955.5 243.5 1946.9 240.5 1939.8 237.6C1932.6 234.6 1926.3 231.9 1921.9 227.6C1917.4 223.3 1913.9 216.7 1912.9 211.7C1911.9 206.7 1913.4 202.1 1915.9 197.8C1918.4 193.4 1923.0 189.3 1927.8 185.8C1932.6 182.3 1938.6 179.4 1944.8 176.9C1950.9 174.4 1957.4 172.2 1964.7 170.9C1971.9 169.6 1984.6 169.2 1988.5 168.9" fill="none" stroke="#f24e4b" stroke-width="2.600" stroke-linecap="round"/><path d="M2074.1 171.4C2077.4 172.6 2088.5 176.1 2094.0 178.9C2099.5 181.6 2103.8 184.2 2106.9 187.8C2110.1 191.5 2112.6 196.3 2112.9 200.7C2113.2 205.2 2112.1 209.9 2108.9 214.7C2105.8 219.5 2099.8 225.5 2094.0 229.6C2088.2 233.7 2082.4 236.6 2074.1 239.6C2065.8 242.5 2054.2 245.7 2044.3 247.5C2034.3 249.3 2022.7 250.2 2014.4 250.5C2006.1 250.8 2002.8 250.3 1994.5 249.5C1986.2 248.7 1973.8 247.5 1964.7 245.5C1955.5 243.5 1946.9 240.5 1939.8 237.6C1932.6 234.6 1926.3 231.9 1921.9 227.6C1917.4 223.3 1913.9 216.7 1912.9 211.7C1911.9 206.7 1913.4 202.1 1915.9 197.8C1918.4 193.4 1925.8 187.8 1927.8 185.8" fill="none" stroke="#f24e4b" stroke-width="4.600" stroke-linecap="round"/>
<path d="M1702.2 226L2006.8 390.6L2006.5 368.4L2042.5 421.7L1977.4 419.7L1996.2 409.1L1692.6 243.6A10 10 0 0 1 1702.2 226z" fill="#fb5c4e" filter="url(#ash)"/>
</svg>
<!--EDGES-->
<div class="a" style="left:0;top:0;width:1.6px;height:1630px;background:#303030"></div>
<div class="a" style="left:2598px;top:0;width:2px;height:1630px;background:#383838"></div>
<div class="a" style="left:0;top:0;width:2600px;height:1630px;border-radius:11px 11px 0 0;box-shadow:inset 0 1.7px 0 #383838;pointer-events:none"></div>
</div>
</body>
</html>
